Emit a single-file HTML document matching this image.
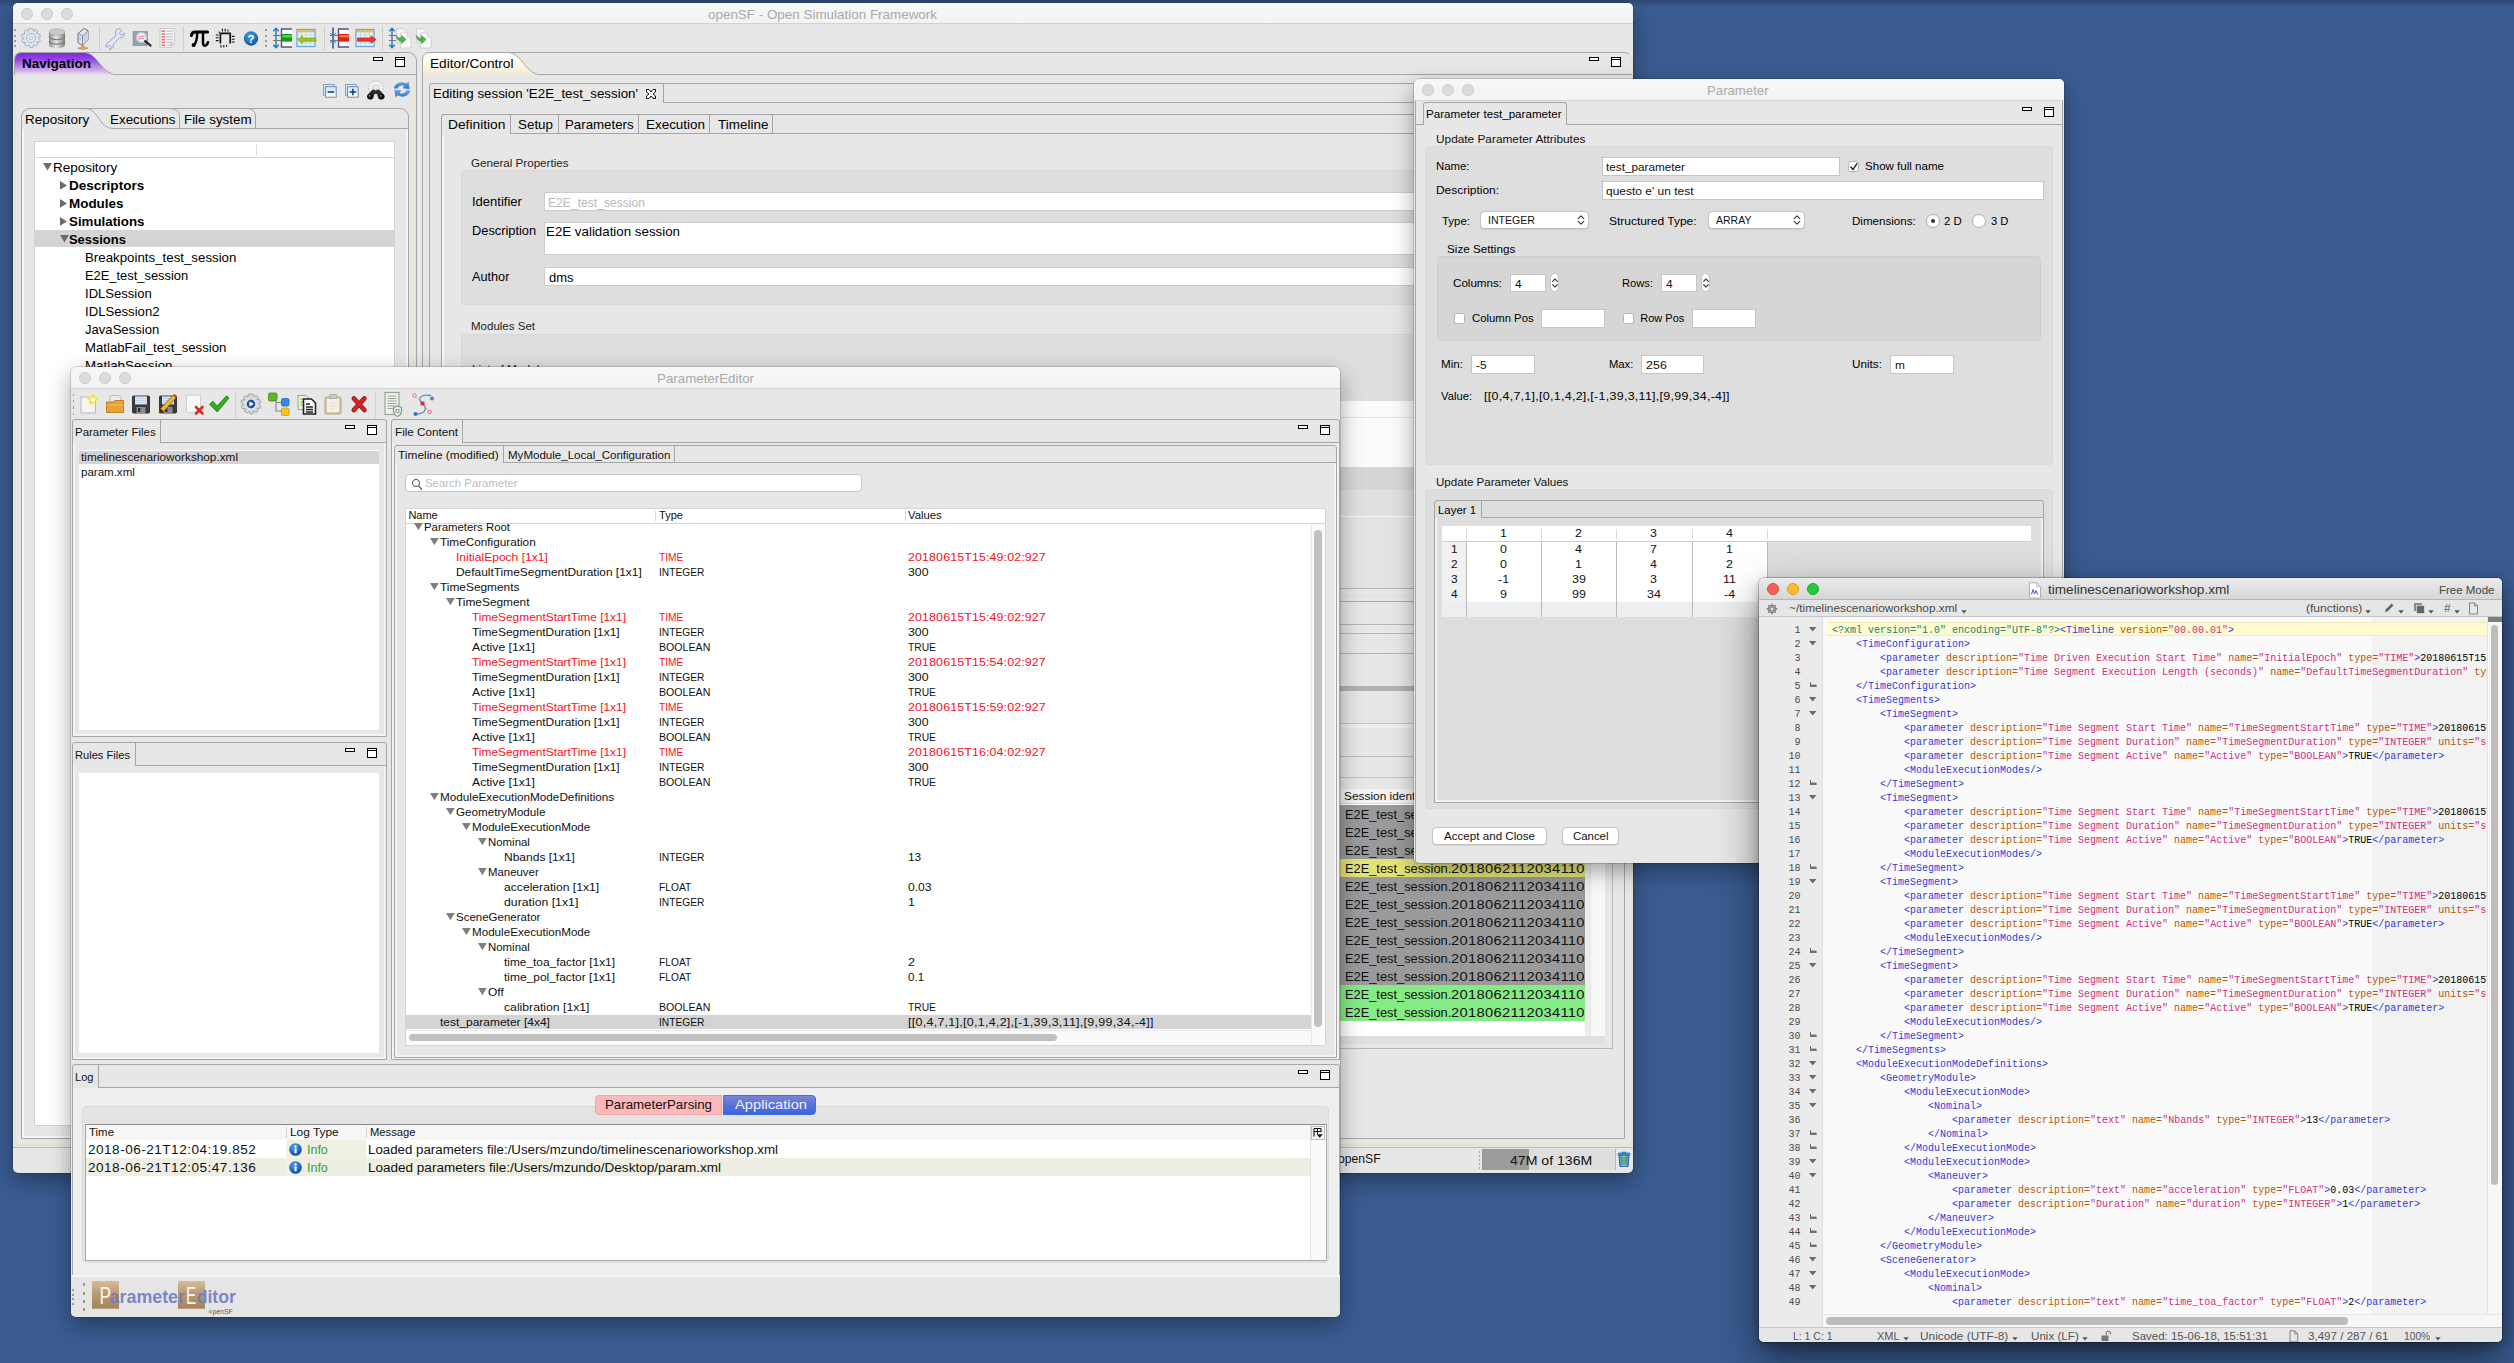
<!DOCTYPE html><html><head><meta charset="utf-8"><title>desktop</title><style>
html,body{margin:0;padding:0}
body{width:2514px;height:1363px;overflow:hidden;position:relative;background:#3a5c91;font-family:"Liberation Sans",sans-serif}
.win{position:absolute;overflow:hidden}
.win div,.win svg,.win span.a{position:absolute}
.topshade{position:absolute;left:0;top:0;width:2514px;height:7px;background:linear-gradient(rgba(0,0,0,.22),rgba(0,0,0,0))}
</style></head><body><div class="topshade"></div><div class="win" style="left:13px;top:3px;width:1620px;height:1170px;background:#e7e7e7;border-radius:5px;box-shadow:0 0 0 0.5px rgba(0,0,0,.28),0 8px 22px rgba(0,0,0,.36)"><div style="left:0.0px;top:0.0px;width:1620.0px;height:21.0px;background:linear-gradient(#f7f7f7,#f3f3f3);border-bottom:1px solid #d2d2d2;box-sizing:border-box"></div><div style="left:8.0px;top:5.0px;width:12.0px;height:12.0px;border-radius:50%;background:#dcdcdc;border:0.5px solid #cbcbcb;box-sizing:border-box"></div><div style="left:28.0px;top:5.0px;width:12.0px;height:12.0px;border-radius:50%;background:#dcdcdc;border:0.5px solid #cbcbcb;box-sizing:border-box"></div><div style="left:48.0px;top:5.0px;width:12.0px;height:12.0px;border-radius:50%;background:#dcdcdc;border:0.5px solid #cbcbcb;box-sizing:border-box"></div><div style="left:695.0px;top:4.0px;font-size:13px;line-height:16px;color:#a9a9a9;white-space:pre;transform:scaleX(1.0324);transform-origin:0 0;">openSF - Open Simulation Framework</div><div style="left:0.0px;top:21.0px;width:1620.0px;height:27.0px;background:#e7e7e7"></div><div style="left:86.0px;top:22.5px;width:1.0px;height:25.5px;background:#cfcfcf"></div><div style="left:170.2px;top:22.5px;width:1.0px;height:25.5px;background:#cfcfcf"></div><div style="left:311.2px;top:22.5px;width:1.0px;height:25.5px;background:#cfcfcf"></div><div style="left:369.0px;top:22.5px;width:1.0px;height:25.5px;background:#cfcfcf"></div><div style="left:1.2px;top:26.4px;width:1.7px;height:2.0px;background:#a39c88"></div><div style="left:1.2px;top:31.6px;width:1.7px;height:2.0px;background:#a39c88"></div><div style="left:1.2px;top:36.9px;width:1.7px;height:2.0px;background:#a39c88"></div><div style="left:1.2px;top:42.1px;width:1.7px;height:2.0px;background:#a39c88"></div><div style="left:252.0px;top:26.4px;width:1.7px;height:2.0px;background:#a39c88"></div><div style="left:252.0px;top:31.6px;width:1.7px;height:2.0px;background:#a39c88"></div><div style="left:252.0px;top:36.9px;width:1.7px;height:2.0px;background:#a39c88"></div><div style="left:252.0px;top:42.1px;width:1.7px;height:2.0px;background:#a39c88"></div><svg style="left:7.0px;top:23.0px;" width="22" height="24" viewBox="0 0 22 24"><g transform="translate(11,12)"><path d="M0,-9.5 L2,-9.2 L2.8,-6.8 L5,-8.3 L6.8,-6.6 L5.6,-4.3 L8.6,-4 L9.4,-1.6 L7,-0.3 L9.3,1.8 L8.4,4.2 L5.6,4 L6.7,6.7 L4.8,8.3 L2.7,6.6 L1.8,9.3 L-0.8,9.5 L-1.8,6.9 L-4.2,8.5 L-6.3,7 L-5.4,4.4 L-8.3,4.5 L-9.4,2.1 L-7.2,0.4 L-9.5,-1.4 L-8.8,-3.9 L-5.9,-3.9 L-7,-6.5 L-5.2,-8.2 L-2.8,-6.8 L-2.3,-9.3 Z" fill="#dfe5ee" stroke="#9aa9c0" stroke-width="0.9"/><circle r="4.4" fill="#eef2f8" stroke="#9aa9c0" stroke-width="0.9"/><circle r="2" fill="#e7e7e7" stroke="#a8b4c8" stroke-width="0.7"/></g></svg><svg style="left:33.2px;top:23.0px;" width="22" height="24" viewBox="0 0 22 24"><defs><linearGradient id="gdb" x1="0" x2="1"><stop offset="0" stop-color="#8d8d8d"/><stop offset="0.45" stop-color="#e6e6e6"/><stop offset="1" stop-color="#7e7e7e"/></linearGradient></defs><path d="M3,6 L3,19 A8,3.2 0 0 0 19,19 L19,6 Z" fill="url(#gdb)"/><ellipse cx="11" cy="6" rx="8" ry="3.2" fill="#c9c9c9" stroke="#a5a5a5" stroke-width="0.6"/><path d="M3,10.5 A8,3.2 0 0 0 19,10.5 M3,15 A8,3.2 0 0 0 19,15" fill="none" stroke="#6f6f6f" stroke-width="1"/></svg><svg style="left:59.0px;top:23.0px;" width="22" height="24" viewBox="0 0 22 24"><path d="M6,7.5 L12,2.6 L16,4.6 L16,14 L10.5,19.6 L6,16.6 Z" fill="#e6e4f1" stroke="#5f5f7c" stroke-width="0.9" stroke-linejoin="round"/><path d="M10.5,10 L16,4.8 L16,14 L10.5,19.4 Z" fill="#d2d0e4"/><path d="M6,7.5 L10.5,10 L16,4.8 M10.5,10 L10.5,19.4" fill="none" stroke="#7c7c98" stroke-width="0.8"/><path d="M7.2,11 L9.3,12.2 M7.2,13 L9.3,14.2" stroke="#9a9ab8" stroke-width="0.8"/><rect x="10.4" y="19.4" width="1.2" height="2" fill="#6d6d8a"/><rect x="6" y="21.4" width="10" height="1.5" fill="#8f93ad"/><circle cx="11" cy="22" r="1.9" fill="#ffab2e" stroke="#e27a12" stroke-width="0.6"/></svg><svg style="left:91.0px;top:23.0px;" width="22" height="24" viewBox="0 0 22 24"><path d="M14.5,2.5 A4.2,4.2 0 0 0 12.2,9 L5.5,15.8 A3.8,3.8 0 0 0 2.6,21.5 L5.4,19 L7.6,21 L5.2,23.3 A3.8,3.8 0 0 0 9.3,18.3 L15.5,11.8 A4.2,4.2 0 0 0 20.3,7 L17.6,9.4 L15.3,7.3 L17.8,4.4 A4.2,4.2 0 0 0 14.5,2.5 Z" fill="#e4e9f2" stroke="#92a2c0" stroke-width="1"/></svg><svg style="left:116.8px;top:23.0px;" width="22" height="24" viewBox="0 0 22 24"><rect x="3" y="5.5" width="14.5" height="14" fill="#93a1ad" stroke="#7d8a96" stroke-width="0.6"/><circle cx="11.5" cy="11.5" r="5.2" fill="#e9eef3" stroke="#b9c3cc" stroke-width="1.2"/><path d="M8,11 L15,10 M8,13 L14,12.4" stroke="#e58c8c" stroke-width="0.9"/><path d="M15.2,15.2 L20.5,19.5" stroke="#222" stroke-width="2.2" stroke-linecap="round"/></svg><svg style="left:143.0px;top:23.0px;" width="22" height="24" viewBox="0 0 22 24"><path d="M4,2.5 L18.5,2.5 L18.5,17 L14.5,21.5 L4,21.5 Z" fill="#f4f4f4" stroke="#c3c3c3" stroke-width="0.8"/><path d="M18.5,17 L14.5,17 L14.5,21.5 Z" fill="#d0d0d0"/><rect x="5.5" y="4.5" width="3.6" height="1.5" fill="#ee6b6b"/><rect x="10.3" y="4.5" width="6.5" height="1.3" fill="#c8c8c8"/><rect x="5.5" y="7.3" width="3.6" height="1.5" fill="#ee6b6b"/><rect x="10.3" y="7.3" width="6.5" height="1.3" fill="#c8c8c8"/><rect x="5.5" y="10.1" width="3.6" height="1.5" fill="#ee6b6b"/><rect x="10.3" y="10.1" width="6.5" height="1.3" fill="#c8c8c8"/><rect x="5.5" y="12.899999999999999" width="3.6" height="1.5" fill="#ee6b6b"/><rect x="10.3" y="12.899999999999999" width="6.5" height="1.3" fill="#c8c8c8"/><rect x="5.5" y="15.7" width="3.6" height="1.5" fill="#ee6b6b"/><rect x="10.3" y="15.7" width="6.5" height="1.3" fill="#c8c8c8"/><rect x="5.5" y="18.5" width="3.6" height="1.5" fill="#ee6b6b"/><rect x="10.3" y="18.5" width="6.5" height="1.3" fill="#c8c8c8"/></svg><svg style="left:176.6px;top:25.6px;" width="20" height="20" viewBox="0 0 20 20"><g fill="none" stroke="#000" stroke-linecap="round"><path d="M1.4,6.6 C1.8,3.4 3.4,2.9 5.4,2.9 L17.6,2.9" stroke-width="3"/><path d="M7.2,3.6 C7.2,9 6.6,14 3.6,16.6" stroke-width="2.5"/><path d="M13,3.6 L13,13.4 C13,17.6 16.6,18 18,13.2" stroke-width="2.5"/></g><circle cx="3.6" cy="16" r="2" fill="#000"/></svg><svg style="left:200.8px;top:23.0px;" width="22" height="24" viewBox="0 0 22 24"><path d="M6.4,17.5 L6.4,7.3 L16.2,7.3 L16.2,17.5" fill="none" stroke="#111" stroke-width="1.7"/><path d="M1.8,9 L4.6,9 M1.8,11.8 L4.6,11.8 M1.8,14.6 L4.6,14.6 M17.8,10.4 L20.6,10.4 M17.8,13.2 L20.6,13.2 M17.8,16 L20.6,16 M8.4,2.8 L8.4,5.4 M11.2,2.8 L11.2,5.4 M14,3.6 L14,5.4 M7,19 L7,21.6 M9.8,19 L9.8,21.6 M12.6,19 L12.6,20.8" stroke="#111" stroke-width="1.1"/><rect x="4.6" y="5.6" width="1.2" height="1.2" fill="#111"/></svg><svg style="left:227.0px;top:23.0px;" width="22" height="24" viewBox="0 0 22 24"><defs><radialGradient id="ghe" cx="0.4" cy="0.3" r="0.8"><stop offset="0" stop-color="#3f9bdc"/><stop offset="1" stop-color="#0f4f9a"/></radialGradient></defs><circle cx="11" cy="12.5" r="7.2" fill="url(#ghe)"/><text x="11" y="16.8" font-family="Liberation Sans" font-weight="700" font-size="11.5" fill="#fff" text-anchor="middle">?</text></svg><svg style="left:258.6px;top:23.0px;" width="22" height="24" viewBox="0 0 22 24"><path d="M4,2.5 L4,21.5 M1.3,5.3 L4,2.3 L6.7,5.3 M1.3,18.7 L4,21.7 L6.7,18.7" fill="none" stroke="#1f78c8" stroke-width="1.4"/><path d="M1,9.5 L9,9.5 M1,14.5 L9,14.5" stroke="#777" stroke-width="1.2"/><path d="M20,3 L9.5,3 L9.5,21 L20,21" fill="#fff" stroke="#5c5078" stroke-width="1.4"/><rect x="9.5" y="8" width="10.5" height="7.6" fill="#119a11"/><rect x="10.5" y="9.2" width="9.5" height="2.2" fill="#5fd45f"/></svg><svg style="left:282.4px;top:23.0px;" width="24" height="24" viewBox="0 0 24 24"><rect x="2" y="3.5" width="18" height="17" fill="#eaf4fc" stroke="#69a7d8" stroke-width="1.3"/><rect x="2.6" y="4.2" width="16.8" height="2.2" fill="#f3b434"/><path d="M6.5,4 L6.5,20 M11,4 L11,20 M15.5,4 L15.5,20 M2,9 L20,9 M2,13 L20,13 M2,17 L20,17" stroke="#b7d6ee" stroke-width="0.9"/><path d="M2.5,13.6 L7.5,10 L7.5,12 L21,12 L21,15.2 L7.5,15.2 L7.5,17.2 Z" fill="#a4c516" stroke="#7f9d06" stroke-width="0.7"/></svg><svg style="left:316.3px;top:23.0px;" width="22" height="24" viewBox="0 0 22 24"><path d="M4,1.5 L4,22.5" stroke="#104a9c" stroke-width="1.4"/><path d="M1,7.2 L3,9 M7,7.2 L5,9 M1,16.8 L3,15 M7,16.8 L5,15" stroke="#1f78c8" stroke-width="1"/><path d="M1,9.5 L9,9.5 M1,14.5 L9,14.5" stroke="#777" stroke-width="1.2"/><path d="M20,3 L9.5,3 L9.5,21 L20,21" fill="#fff" stroke="#5c5078" stroke-width="1.4"/><rect x="9.5" y="8" width="10.5" height="7.6" fill="#e21d0a"/><rect x="10.5" y="9.2" width="9.5" height="2.2" fill="#ff7b55"/></svg><svg style="left:340.6px;top:23.0px;" width="24" height="24" viewBox="0 0 24 24"><rect x="2" y="3.5" width="18" height="17" fill="#eaf4fc" stroke="#69a7d8" stroke-width="1.3"/><rect x="2.6" y="4.2" width="16.8" height="2.2" fill="#f3b434"/><path d="M6.5,4 L6.5,20 M11,4 L11,20 M15.5,4 L15.5,20 M2,9 L20,9 M2,13 L20,13 M2,17 L20,17" stroke="#b7d6ee" stroke-width="0.9"/><path d="M22,13.6 L17,10 L17,12 L3.5,12 L3.5,15.2 L17,15.2 L17,17.2 Z" fill="#e8382a" stroke="#c3170b" stroke-width="0.7"/></svg><svg style="left:374.5px;top:23.0px;" width="24" height="24" viewBox="0 0 24 24"><path d="M4,2.5 L4,21.5 M1.3,5.3 L4,2.3 L6.7,5.3 M1.3,18.7 L4,21.7 L6.7,18.7" fill="none" stroke="#1f78c8" stroke-width="1.4"/><path d="M1,9.5 L8,9.5 M1,14.5 L8,14.5" stroke="#777" stroke-width="1.2"/><g transform="translate(7.5,0)"><path d="M1,2.5 L7.5,2.5 L11.5,6.5 L11.5,16 L1,16 Z" fill="#f4f4f4" stroke="#cdcdcd" stroke-width="0.9"/><path d="M5,7 L11.5,7 L15.5,11 L15.5,22 L5,22 Z" fill="#fbfbfb" stroke="#cdcdcd" stroke-width="0.9"/><path d="M11.5,7 L11.5,11 L15.5,11" fill="#ececec" stroke="#cdcdcd" stroke-width="0.7"/><path d="M0.5,9.2 C2.5,12.5 4.5,12.2 6,12 L6,9.4 L10.6,13.4 L6,17.4 L6,15 C3.5,15.6 1.5,13.5 0.5,9.2 Z" fill="#4fb44c" stroke="#2f8f2e" stroke-width="0.6"/></g></svg><svg style="left:400.0px;top:23.0px;" width="24" height="24" viewBox="0 0 24 24"><g transform="translate(2.5,0)"><path d="M1,2.5 L7.5,2.5 L11.5,6.5 L11.5,16 L1,16 Z" fill="#f4f4f4" stroke="#cdcdcd" stroke-width="0.9"/><path d="M5,7 L11.5,7 L15.5,11 L15.5,22 L5,22 Z" fill="#fbfbfb" stroke="#cdcdcd" stroke-width="0.9"/><path d="M11.5,7 L11.5,11 L15.5,11" fill="#ececec" stroke="#cdcdcd" stroke-width="0.7"/><path d="M0.5,9.2 C2.5,12.5 4.5,12.2 6,12 L6,9.4 L10.6,13.4 L6,17.4 L6,15 C3.5,15.6 1.5,13.5 0.5,9.2 Z" fill="#4fb44c" stroke="#2f8f2e" stroke-width="0.6"/></g></svg><div style="left:1.0px;top:48.5px;width:402.5px;height:1094.5px;border:1px solid #a6a6a6;border-left:2px solid #ebe4cb;border-bottom:2px solid #ebe4cb;border-radius:9px 9px 0 0;box-sizing:border-box"></div><svg style="left:1.0px;top:48.5px;" width="110" height="24" viewBox="0 0 110 24"><defs><linearGradient id="gp" x1="0" y1="0" x2="0" y2="1"><stop offset="0" stop-color="#7f23df"/><stop offset="0.3" stop-color="#9245e4"/><stop offset="0.75" stop-color="#cba7ec"/><stop offset="1" stop-color="#ebe6e2"/></linearGradient></defs><path d="M0.5,23.5 L0.5,8 Q0.5,0.5 8,0.5 L70,0.5 C84,0.5 87,23 104,23 L104,23.5 Z" fill="url(#gp)"/><path d="M0.5,23.5 L0.5,8 Q0.5,0.5 8,0.5 L70,0.5 C84,0.5 87,23 104,23" fill="none" stroke="#a6a6a6" stroke-width="1"/></svg><div style="left:105.0px;top:71.0px;width:298.0px;height:1.0px;background:#a6a6a6"></div><div style="left:401.2px;top:72.0px;width:1.6px;height:1069.0px;background:#ece6cd"></div><div style="left:9.0px;top:53.0px;font-size:13px;line-height:16px;color:#000;white-space:pre;font-weight:700;transform:scaleX(1.0383);transform-origin:0 0;">Navigation</div><div style="left:360.3px;top:54.0px;width:10.0px;height:4.0px;border:1px solid #000;box-sizing:border-box;background:#fff"></div><div style="left:382.2px;top:54.0px;width:10.0px;height:10.0px;border:1px solid #000;box-sizing:border-box;background:#fff"></div><div style="left:383.2px;top:56.0px;width:8.0px;height:1.0px;background:#000"></div><svg style="left:309.6px;top:80.6px;" width="14" height="14" viewBox="0 0 14 14"><defs><linearGradient id="gst322" x1="0" y1="0" x2="0" y2="1"><stop offset="0" stop-color="#cfe9fb"/><stop offset="1" stop-color="#ffffff"/></linearGradient></defs><rect x="0.5" y="0.5" width="10.7" height="10.7" fill="#d6ecfb" stroke="#8f9ac6" stroke-width="1"/><rect x="2.5" y="2.7" width="10.7" height="10.5" fill="url(#gst322)" stroke="#7a86b8" stroke-width="1"/><path d="M4.6,8 L11.2,8" stroke="#0b3b7a" stroke-width="1.5"/></svg><svg style="left:331.6px;top:80.6px;" width="14" height="14" viewBox="0 0 14 14"><defs><linearGradient id="gst344" x1="0" y1="0" x2="0" y2="1"><stop offset="0" stop-color="#cfe9fb"/><stop offset="1" stop-color="#ffffff"/></linearGradient></defs><rect x="0.5" y="0.5" width="10.7" height="10.7" fill="#d6ecfb" stroke="#8f9ac6" stroke-width="1"/><rect x="2.5" y="2.7" width="10.7" height="10.5" fill="url(#gst344)" stroke="#7a86b8" stroke-width="1"/><path d="M4.6,8 L11.2,8" stroke="#0b3b7a" stroke-width="1.5"/><path d="M7.9,4.8 L7.9,11.2" stroke="#0b3b7a" stroke-width="1.5"/></svg><svg style="left:351.5px;top:76.5px;" width="22" height="21" viewBox="0 0 22 21"><g><circle cx="10.8" cy="8.2" r="5.6" fill="none" stroke="#f4f4f4" stroke-width="3.6"/><circle cx="10.8" cy="8.2" r="7.2" fill="none" stroke="#c4c4c4" stroke-width="1.3" stroke-dasharray="1.7 1.3"/><circle cx="10.8" cy="8.2" r="3.7" fill="none" stroke="#cfcfcf" stroke-width="0.7"/><path d="M7,10 L9.6,9.4 L10.8,11 L12,9.4 L14.6,10 L19.8,16 A3.6,3.6 0 0 1 13.4,18.2 L12.2,14 L9.4,14 L8.2,18.2 A3.6,3.6 0 0 1 1.8,16 Z" fill="#2b2b2b"/><circle cx="5.2" cy="16.4" r="2.9" fill="#111"/><circle cx="16.4" cy="16.4" r="2.9" fill="#111"/><circle cx="4.6" cy="15.8" r="0.9" fill="#9a9a9a"/><circle cx="15.8" cy="15.8" r="0.9" fill="#9a9a9a"/></g></svg><svg style="left:379.5px;top:77.0px;" width="18" height="19" viewBox="0 0 18 19"><defs><linearGradient id="grf" x1="0" y1="0" x2="0" y2="1"><stop offset="0" stop-color="#6aa6e6"/><stop offset="1" stop-color="#2f74c6"/></linearGradient></defs><path d="M1,8.6 A7.6,6.6 0 0 1 13.2,3.6 L15.6,1.4 L16.6,9 L9.4,8.2 L11.4,5.9 A4.6,3.8 0 0 0 4.6,8.6 Z" fill="url(#grf)"/><path d="M17,10.2 A7.6,6.6 0 0 1 4.8,15.2 L2.4,17.4 L1.4,9.8 L8.6,10.6 L6.6,12.9 A4.6,3.8 0 0 0 13.4,10.2 Z" fill="url(#grf)"/></svg><div style="left:8.0px;top:105.0px;width:388.0px;height:1031.0px;border:1px solid #a6a6a6;border-radius:9px 9px 0 0;box-sizing:border-box"></div><div style="left:99.0px;top:125.0px;width:296.0px;height:1.0px;background:#a6a6a6"></div><svg style="left:73.0px;top:105.0px;" width="30" height="22" viewBox="0 0 30 22"><path d="M0,0.5 C12,0.5 13,20.5 27,20.5" fill="none" stroke="#a6a6a6" stroke-width="1"/></svg><svg style="left:157.0px;top:105.0px;" width="12" height="22" viewBox="0 0 12 22"><path d="M0,0.5 Q9.5,0.5 9.5,8 L9.5,21" fill="none" stroke="#a6a6a6" stroke-width="1"/></svg><svg style="left:233.0px;top:105.0px;" width="12" height="22" viewBox="0 0 12 22"><path d="M0,0.5 Q9.5,0.5 9.5,8 L9.5,21" fill="none" stroke="#a6a6a6" stroke-width="1"/></svg><div style="left:12.0px;top:109.0px;font-size:13px;line-height:16px;color:#000;white-space:pre;transform:scaleX(1.0348);transform-origin:0 0;">Repository</div><div style="left:97.0px;top:109.0px;font-size:13px;line-height:16px;color:#000;white-space:pre;transform:scaleX(1.0300);transform-origin:0 0;">Executions</div><div style="left:171.0px;top:109.0px;font-size:13px;line-height:16px;color:#000;white-space:pre;transform:scaleX(1.0269);transform-origin:0 0;">File system</div><div style="left:9.0px;top:126.0px;width:2.0px;height:1009.0px;background:#f6f6f6"></div><div style="left:9.0px;top:1133.0px;width:386.0px;height:2.0px;background:#f6f6f6"></div><div style="left:393.0px;top:126.0px;width:2.0px;height:1008.0px;background:#f6f6f6"></div><div style="left:21.0px;top:138.0px;width:361.4px;height:984.5px;background:#fff;border:1px solid #d2d2d2;box-sizing:border-box"></div><div style="left:22.0px;top:154.0px;width:359.4px;height:1.0px;background:#d9d9d9"></div><div style="left:243.4px;top:141.0px;width:1.0px;height:11.0px;background:#dcdcdc"></div><div style="left:22.0px;top:227.0px;width:359.4px;height:17.0px;background:#d4d4d4"></div><svg style="left:29.9px;top:160.4px;" width="9" height="7.6" viewBox="0 0 9 7.6"><path d="M0,0 L9,0 L4.5,7.6 Z" fill="#6c6c6c"/></svg><div style="left:40.4px;top:157.0px;font-size:13px;line-height:16px;color:#000;white-space:pre;transform:scaleX(1.0348);transform-origin:0 0;">Repository</div><svg style="left:47.0px;top:177.8px;" width="7" height="8.8" viewBox="0 0 7 8.8"><path d="M0,0 L7,4.4 L0,8.8 Z" fill="#6c6c6c"/></svg><div style="left:55.9px;top:175.0px;font-size:13px;line-height:16px;color:#000;white-space:pre;font-weight:700;transform:scaleX(1.0408);transform-origin:0 0;">Descriptors</div><svg style="left:47.0px;top:195.8px;" width="7" height="8.8" viewBox="0 0 7 8.8"><path d="M0,0 L7,4.4 L0,8.8 Z" fill="#6c6c6c"/></svg><div style="left:55.9px;top:193.0px;font-size:13px;line-height:16px;color:#000;white-space:pre;font-weight:700;transform:scaleX(1.0337);transform-origin:0 0;">Modules</div><svg style="left:47.0px;top:213.8px;" width="7" height="8.8" viewBox="0 0 7 8.8"><path d="M0,0 L7,4.4 L0,8.8 Z" fill="#6c6c6c"/></svg><div style="left:55.9px;top:211.0px;font-size:13px;line-height:16px;color:#000;white-space:pre;font-weight:700;transform:scaleX(1.0247);transform-origin:0 0;">Simulations</div><svg style="left:46.6px;top:232.4px;" width="9" height="7.6" viewBox="0 0 9 7.6"><path d="M0,0 L9,0 L4.5,7.6 Z" fill="#6c6c6c"/></svg><div style="left:55.9px;top:229.0px;font-size:13px;line-height:16px;color:#000;white-space:pre;font-weight:700;">Sessions</div><div style="left:72.2px;top:247.0px;font-size:13px;line-height:16px;color:#000;white-space:pre;transform:scaleX(1.0220);transform-origin:0 0;">Breakpoints_test_session</div><div style="left:72.2px;top:265.0px;font-size:13px;line-height:16px;color:#000;white-space:pre;transform:scaleX(0.9917);transform-origin:0 0;">E2E_test_session</div><div style="left:72.2px;top:283.0px;font-size:13px;line-height:16px;color:#000;white-space:pre;transform:scaleX(1.0048);transform-origin:0 0;">IDLSession</div><div style="left:72.2px;top:301.0px;font-size:13px;line-height:16px;color:#000;white-space:pre;transform:scaleX(1.0107);transform-origin:0 0;">IDLSession2</div><div style="left:72.2px;top:319.0px;font-size:13px;line-height:16px;color:#000;white-space:pre;transform:scaleX(1.0066);transform-origin:0 0;">JavaSession</div><div style="left:72.2px;top:337.0px;font-size:13px;line-height:16px;color:#000;white-space:pre;transform:scaleX(1.0132);transform-origin:0 0;">MatlabFail_test_session</div><div style="left:72.2px;top:355.0px;font-size:13px;line-height:16px;color:#000;white-space:pre;transform:scaleX(1.0261);transform-origin:0 0;">MatlabSession</div><div style="left:408.5px;top:48.5px;width:1211.0px;height:1094.5px;border:1px solid #a6a6a6;border-right:2px solid #ebe4cb;border-bottom:2px solid #ebe4cb;border-radius:9px 9px 0 0;box-sizing:border-box"></div><svg style="left:408.5px;top:48.5px;" width="124" height="24" viewBox="0 0 124 24"><defs><linearGradient id="gc" x1="0" y1="0" x2="0" y2="1"><stop offset="0" stop-color="#ffffff"/><stop offset="0.5" stop-color="#fbf9f1"/><stop offset="1" stop-color="#efe9d4"/></linearGradient></defs><path d="M0.5,23.5 L0.5,8 Q0.5,0.5 8,0.5 L86,0.5 C100,0.5 103,23 120,23 L120,23.5 Z" fill="url(#gc)"/><path d="M0.5,23.5 L0.5,8 Q0.5,0.5 8,0.5 L86,0.5 C100,0.5 103,23 120,23" fill="none" stroke="#a6a6a6" stroke-width="1"/></svg><div style="left:528.0px;top:71.0px;width:1091.0px;height:1.0px;background:#a6a6a6"></div><div style="left:417.0px;top:53.0px;font-size:13px;line-height:16px;color:#000;white-space:pre;transform:scaleX(1.0506);transform-origin:0 0;">Editor/Control</div><div style="left:1576.2px;top:54.0px;width:10.0px;height:4.0px;border:1px solid #000;box-sizing:border-box;background:#fff"></div><div style="left:1598.2px;top:54.0px;width:10.0px;height:10.0px;border:1px solid #000;box-sizing:border-box;background:#fff"></div><div style="left:1599.2px;top:56.0px;width:8.0px;height:1.0px;background:#000"></div><div style="left:416.4px;top:79.5px;width:1195.5px;height:1056.3px;border:1px solid #a6a6a6;border-radius:3px 3px 0 0;box-sizing:border-box"></div><div style="left:650.0px;top:79.5px;width:1.0px;height:20.0px;background:#a6a6a6"></div><div style="left:650.0px;top:98.7px;width:961.0px;height:1.0px;background:#a6a6a6"></div><div style="left:420.0px;top:83.0px;font-size:13px;line-height:16px;color:#000;white-space:pre;transform:scaleX(1.0246);transform-origin:0 0;">Editing session 'E2E_test_session'</div><svg style="left:632.0px;top:85.0px;" width="12" height="12" viewBox="0 0 12 12"><path d="M1.5,1.5 L4,1.5 L6,4 L8,1.5 L10.5,1.5 L10.5,4 L8,6 L10.5,8 L10.5,10.5 L8,10.5 L6,8 L4,10.5 L1.5,10.5 L1.5,8 L4,6 L1.5,4 Z" fill="#fff" stroke="#111" stroke-width="1"/></svg><div style="left:427.6px;top:111.0px;width:1170.4px;height:1010.0px;border:1px solid #a6a6a6;border-right:none;border-bottom:none;border-radius:3px 0 0 0;box-sizing:border-box"></div><div style="left:496.6px;top:130.0px;width:1100.4px;height:1.0px;background:#a6a6a6"></div><div style="left:496.6px;top:111.5px;width:1.0px;height:19.0px;background:#a6a6a6"></div><div style="left:544.5px;top:111.5px;width:1.0px;height:19.0px;background:#a6a6a6"></div><div style="left:625.4px;top:111.5px;width:1.0px;height:19.0px;background:#a6a6a6"></div><div style="left:696.4px;top:111.5px;width:1.0px;height:19.0px;background:#a6a6a6"></div><div style="left:759.4px;top:111.5px;width:1.0px;height:19.0px;background:#a6a6a6"></div><div style="left:428.6px;top:131.5px;width:2.0px;height:988.5px;background:#f6f6f6"></div><div style="left:434.6px;top:114.0px;font-size:13px;line-height:16px;color:#000;white-space:pre;transform:scaleX(1.0591);transform-origin:0 0;">Definition</div><div style="left:504.6px;top:114.0px;font-size:13px;line-height:16px;color:#000;white-space:pre;transform:scaleX(1.0302);transform-origin:0 0;">Setup</div><div style="left:552.4px;top:114.0px;font-size:13px;line-height:16px;color:#000;white-space:pre;transform:scaleX(1.0209);transform-origin:0 0;">Parameters</div><div style="left:633.4px;top:114.0px;font-size:13px;line-height:16px;color:#000;white-space:pre;transform:scaleX(1.0334);transform-origin:0 0;">Execution</div><div style="left:704.6px;top:114.0px;font-size:13px;line-height:16px;color:#000;white-space:pre;transform:scaleX(1.0361);transform-origin:0 0;">Timeline</div><div style="left:458.4px;top:152.0px;font-size:11px;line-height:16px;color:#222;white-space:pre;transform:scaleX(1.0560);transform-origin:0 0;">General Properties</div><div style="left:448.0px;top:167.4px;width:1139.0px;height:134.6px;background:#dedede;border-radius:4px;border:1px solid #d8d8d8;box-sizing:border-box"></div><div style="left:459.0px;top:191.0px;font-size:13px;line-height:16px;color:#000;white-space:pre;">Identifier</div><div style="left:531.4px;top:189.0px;width:1045.6px;height:19.0px;background:#fff;border:1px solid #cdcdcd;box-sizing:border-box"></div><div style="left:535.3px;top:192.0px;font-size:12px;line-height:16px;color:#b9b9b9;white-space:pre;transform:scaleX(1.0098);transform-origin:0 0;">E2E_test_session</div><div style="left:459.0px;top:220.0px;font-size:13px;line-height:16px;color:#000;white-space:pre;transform:scaleX(0.9857);transform-origin:0 0;">Description</div><div style="left:531.4px;top:219.4px;width:1045.6px;height:32.6px;background:#fff;border:1px solid #cdcdcd;box-sizing:border-box"></div><div style="left:532.6px;top:221.0px;font-size:13px;line-height:16px;color:#000;white-space:pre;transform:scaleX(1.0244);transform-origin:0 0;">E2E validation session</div><div style="left:459.0px;top:266.0px;font-size:13px;line-height:16px;color:#000;white-space:pre;transform:scaleX(0.9764);transform-origin:0 0;">Author</div><div style="left:531.4px;top:264.0px;width:1045.6px;height:19.3px;background:#fff;border:1px solid #cdcdcd;box-sizing:border-box"></div><div style="left:535.5px;top:267.0px;font-size:12px;line-height:16px;color:#000;white-space:pre;transform:scaleX(1.0800);transform-origin:0 0;">dms</div><div style="left:458.4px;top:315.0px;font-size:11px;line-height:16px;color:#222;white-space:pre;transform:scaleX(1.0467);transform-origin:0 0;">Modules Set</div><div style="left:448.0px;top:330.5px;width:1139.0px;height:446.5px;background:#dedede;border-radius:4px;border:1px solid #d8d8d8;box-sizing:border-box"></div><div style="left:459.0px;top:358.0px;font-size:11px;line-height:16px;color:#222;white-space:pre;transform:scaleX(1.0800);transform-origin:0 0;">List of Modules</div><div style="left:1287.0px;top:398.0px;width:140.0px;height:66.0px;background:#fbfbfb"></div><div style="left:1287.0px;top:413.5px;width:140.0px;height:1.0px;background:#e2e2e2"></div><div style="left:1287.0px;top:464.0px;width:140.0px;height:22.7px;background:#d6d6d6"></div><div style="left:1287.0px;top:486.7px;width:140.0px;height:26.6px;background:#e0e0e0"></div><div style="left:1287.0px;top:513.3px;width:140.0px;height:1.2px;background:#f8f8f8"></div><div style="left:1287.0px;top:514.5px;width:140.0px;height:70.5px;background:#e3e3e3"></div><div style="left:1287.0px;top:584.5px;width:140.0px;height:1.0px;background:#b4b4b4"></div><div style="left:1287.0px;top:585.5px;width:140.0px;height:211.5px;background:#e7e7e7"></div><div style="left:1287.0px;top:591.5px;width:140.0px;height:1.0px;background:#ebe2c2"></div><div style="left:1287.0px;top:598.0px;width:140.0px;height:1.0px;background:#aaaaaa"></div><div style="left:1287.0px;top:621.0px;width:140.0px;height:1.0px;background:#b6b6b6"></div><div style="left:1287.0px;top:629.5px;width:140.0px;height:1.0px;background:#b6b6b6"></div><div style="left:1287.0px;top:649.5px;width:140.0px;height:1.0px;background:#b6b6b6"></div><div style="left:1287.0px;top:682.5px;width:140.0px;height:5.0px;background:#b2b2b2"></div><div style="left:1287.0px;top:719.5px;width:140.0px;height:1.0px;background:#c4c4c4"></div><div style="left:1287.0px;top:720.5px;width:140.0px;height:4.0px;background:#eeeeee"></div><div style="left:1287.0px;top:753.0px;width:140.0px;height:1.0px;background:#bcbcbc"></div><div style="left:1287.0px;top:774.0px;width:140.0px;height:1.0px;background:#c4c4c4"></div><div style="left:1287.0px;top:786.0px;width:285.3px;height:247.0px;background:#fff"></div><div style="left:1287.0px;top:786.0px;width:285.3px;height:15.0px;background:#f3f3f3;border-bottom:1px solid #dcdcdc;box-sizing:border-box"></div><div style="left:1331.2px;top:785.0px;font-size:11px;line-height:16px;color:#111;white-space:pre;transform:scaleX(1.0800);transform-origin:0 0;">Session identifier</div><div style="left:1287.0px;top:802.2px;width:285.3px;height:18.0px;background:#9a9a9a"></div><div style="left:1331.5px;top:804.0px;font-size:13px;line-height:16px;color:#111;white-space:pre;transform:scaleX(0.9863);transform-origin:0 0;">E2E_test_session.</div><div style="left:1437.7px;top:804.0px;font-size:13px;line-height:16px;color:#111;white-space:pre;letter-spacing:0.29px;transform:scaleX(1.1300);transform-origin:0 0;">2018062112034110</div><div style="left:1287.0px;top:820.2px;width:285.3px;height:18.0px;background:#9a9a9a"></div><div style="left:1331.5px;top:822.0px;font-size:13px;line-height:16px;color:#111;white-space:pre;transform:scaleX(0.9863);transform-origin:0 0;">E2E_test_session.</div><div style="left:1437.7px;top:822.0px;font-size:13px;line-height:16px;color:#111;white-space:pre;letter-spacing:0.29px;transform:scaleX(1.1300);transform-origin:0 0;">2018062112034110</div><div style="left:1287.0px;top:838.2px;width:285.3px;height:18.0px;background:#9a9a9a"></div><div style="left:1331.5px;top:840.0px;font-size:13px;line-height:16px;color:#111;white-space:pre;transform:scaleX(0.9863);transform-origin:0 0;">E2E_test_session.</div><div style="left:1437.7px;top:840.0px;font-size:13px;line-height:16px;color:#111;white-space:pre;letter-spacing:0.29px;transform:scaleX(1.1300);transform-origin:0 0;">2018062112034110</div><div style="left:1287.0px;top:856.2px;width:285.3px;height:18.0px;background:#e3e375"></div><div style="left:1331.5px;top:858.0px;font-size:13px;line-height:16px;color:#111;white-space:pre;transform:scaleX(0.9863);transform-origin:0 0;">E2E_test_session.</div><div style="left:1437.7px;top:858.0px;font-size:13px;line-height:16px;color:#111;white-space:pre;letter-spacing:0.29px;transform:scaleX(1.1300);transform-origin:0 0;">2018062112034110</div><div style="left:1287.0px;top:874.2px;width:285.3px;height:18.0px;background:#9a9a9a"></div><div style="left:1331.5px;top:876.0px;font-size:13px;line-height:16px;color:#111;white-space:pre;transform:scaleX(0.9863);transform-origin:0 0;">E2E_test_session.</div><div style="left:1437.7px;top:876.0px;font-size:13px;line-height:16px;color:#111;white-space:pre;letter-spacing:0.29px;transform:scaleX(1.1300);transform-origin:0 0;">2018062112034110</div><div style="left:1287.0px;top:892.2px;width:285.3px;height:18.0px;background:#9a9a9a"></div><div style="left:1331.5px;top:894.0px;font-size:13px;line-height:16px;color:#111;white-space:pre;transform:scaleX(0.9863);transform-origin:0 0;">E2E_test_session.</div><div style="left:1437.7px;top:894.0px;font-size:13px;line-height:16px;color:#111;white-space:pre;letter-spacing:0.29px;transform:scaleX(1.1300);transform-origin:0 0;">2018062112034110</div><div style="left:1287.0px;top:910.2px;width:285.3px;height:18.0px;background:#9a9a9a"></div><div style="left:1331.5px;top:912.0px;font-size:13px;line-height:16px;color:#111;white-space:pre;transform:scaleX(0.9863);transform-origin:0 0;">E2E_test_session.</div><div style="left:1437.7px;top:912.0px;font-size:13px;line-height:16px;color:#111;white-space:pre;letter-spacing:0.29px;transform:scaleX(1.1300);transform-origin:0 0;">2018062112034110</div><div style="left:1287.0px;top:928.2px;width:285.3px;height:18.0px;background:#9a9a9a"></div><div style="left:1331.5px;top:930.0px;font-size:13px;line-height:16px;color:#111;white-space:pre;transform:scaleX(0.9863);transform-origin:0 0;">E2E_test_session.</div><div style="left:1437.7px;top:930.0px;font-size:13px;line-height:16px;color:#111;white-space:pre;letter-spacing:0.29px;transform:scaleX(1.1300);transform-origin:0 0;">2018062112034110</div><div style="left:1287.0px;top:946.2px;width:285.3px;height:18.0px;background:#9a9a9a"></div><div style="left:1331.5px;top:948.0px;font-size:13px;line-height:16px;color:#111;white-space:pre;transform:scaleX(0.9863);transform-origin:0 0;">E2E_test_session.</div><div style="left:1437.7px;top:948.0px;font-size:13px;line-height:16px;color:#111;white-space:pre;letter-spacing:0.29px;transform:scaleX(1.1300);transform-origin:0 0;">2018062112034110</div><div style="left:1287.0px;top:964.2px;width:285.3px;height:18.0px;background:#9a9a9a"></div><div style="left:1331.5px;top:966.0px;font-size:13px;line-height:16px;color:#111;white-space:pre;transform:scaleX(0.9863);transform-origin:0 0;">E2E_test_session.</div><div style="left:1437.7px;top:966.0px;font-size:13px;line-height:16px;color:#111;white-space:pre;letter-spacing:0.29px;transform:scaleX(1.1300);transform-origin:0 0;">2018062112034110</div><div style="left:1287.0px;top:982.2px;width:285.3px;height:18.0px;background:#85eb85"></div><div style="left:1331.5px;top:984.0px;font-size:13px;line-height:16px;color:#111;white-space:pre;transform:scaleX(0.9863);transform-origin:0 0;">E2E_test_session.</div><div style="left:1437.7px;top:984.0px;font-size:13px;line-height:16px;color:#111;white-space:pre;letter-spacing:0.29px;transform:scaleX(1.1300);transform-origin:0 0;">2018062112034110</div><div style="left:1287.0px;top:1000.2px;width:285.3px;height:18.0px;background:#85eb85"></div><div style="left:1331.5px;top:1002.0px;font-size:13px;line-height:16px;color:#111;white-space:pre;transform:scaleX(0.9863);transform-origin:0 0;">E2E_test_session.</div><div style="left:1437.7px;top:1002.0px;font-size:13px;line-height:16px;color:#111;white-space:pre;letter-spacing:0.29px;transform:scaleX(1.1300);transform-origin:0 0;">2018062112034110</div><div style="left:1572.3px;top:786.0px;width:5.2px;height:247.0px;background:#ececec"></div><div style="left:1577.5px;top:786.0px;width:14.2px;height:247.0px;background:#f8f8f8"></div><div style="left:1287.0px;top:1033.0px;width:304.7px;height:8.0px;background:#dfdfdf"></div><div style="left:1187.0px;top:597.0px;width:413.0px;height:448.7px;border:1px solid #b7b7b7;border-left:none;border-top:none;box-sizing:border-box"></div><div style="left:0.0px;top:1144.0px;width:1620.0px;height:1.0px;background:#bababa"></div><div style="left:1324.8px;top:1148.0px;font-size:13px;line-height:16px;color:#111;white-space:pre;transform:scaleX(0.9356);transform-origin:0 0;">openSF</div><div style="left:1465.5px;top:1148.0px;width:1.2px;height:2.0px;background:#a8a8a8"></div><div style="left:1465.5px;top:1152.0px;width:1.2px;height:2.0px;background:#a8a8a8"></div><div style="left:1465.5px;top:1156.0px;width:1.2px;height:2.0px;background:#a8a8a8"></div><div style="left:1465.5px;top:1160.0px;width:1.2px;height:2.0px;background:#a8a8a8"></div><div style="left:1465.5px;top:1164.0px;width:1.2px;height:2.0px;background:#a8a8a8"></div><div style="left:1469.0px;top:1146.0px;width:133.5px;height:21.0px;background:#dedede;border-right:1px solid #b9b9b9;box-sizing:border-box"></div><div style="left:1469.0px;top:1146.0px;width:46.8px;height:21.0px;background:#9c9c9c"></div><div style="left:1496.8px;top:1150.0px;font-size:13px;line-height:16px;color:#111;white-space:pre;transform:scaleX(1.0847);transform-origin:0 0;">47M of 136M</div><svg style="left:1604.0px;top:1148.0px;" width="14" height="17" viewBox="0 0 14 17"><defs><linearGradient id="gtr" x1="0" x2="1"><stop offset="0" stop-color="#2f7fd0"/><stop offset="0.5" stop-color="#b9d86a"/><stop offset="1" stop-color="#2f7fd0"/></linearGradient></defs><path d="M2,4 L12,4 L11.2,15.5 L2.8,15.5 Z" fill="url(#gtr)" stroke="#1f66b0" stroke-width="0.9"/><rect x="1" y="2" width="12" height="2.2" rx="1" fill="#3f8fde" stroke="#1f66b0" stroke-width="0.7"/><rect x="5" y="0.8" width="4" height="1.4" fill="#2f7fd0"/><path d="M5,6 L5.3,14 M7,6 L7,14 M9,6 L8.7,14" stroke="#1f66b0" stroke-width="0.7" fill="none"/></svg></div><div class="win" style="left:1414px;top:79px;width:650px;height:783.6px;background:#e7e7e7;border-radius:5px;box-shadow:0 0 0 0.5px rgba(0,0,0,.28),0 8px 22px rgba(0,0,0,.36)"><div style="left:0.0px;top:0.0px;width:650.0px;height:22.0px;background:linear-gradient(#f7f7f7,#f3f3f3);border-bottom:1px solid #d2d2d2;box-sizing:border-box"></div><div style="left:8.0px;top:5.0px;width:12.0px;height:12.0px;border-radius:50%;background:#dcdcdc;border:0.5px solid #cbcbcb;box-sizing:border-box"></div><div style="left:28.0px;top:5.0px;width:12.0px;height:12.0px;border-radius:50%;background:#dcdcdc;border:0.5px solid #cbcbcb;box-sizing:border-box"></div><div style="left:48.0px;top:5.0px;width:12.0px;height:12.0px;border-radius:50%;background:#dcdcdc;border:0.5px solid #cbcbcb;box-sizing:border-box"></div><div style="left:293.2px;top:4.0px;font-size:13px;line-height:16px;color:#a9a9a9;white-space:pre;transform:scaleX(1.0149);transform-origin:0 0;">Parameter</div><div style="left:0.5px;top:22.0px;width:648.4px;height:769.0px;border-left:1px solid #a6a6a6;border-right:1px solid #a6a6a6;box-sizing:border-box"></div><div style="left:1.0px;top:45.0px;width:647.0px;height:1.0px;background:#a6a6a6"></div><div style="left:8.5px;top:23.0px;width:144.4px;height:23.0px;background:#e7e7e7;border:1px solid #a6a6a6;border-bottom:none;border-radius:3px 3px 0 0;box-sizing:border-box"></div><div style="left:12.2px;top:27.0px;font-size:11px;line-height:16px;color:#000;white-space:pre;transform:scaleX(1.0561);transform-origin:0 0;">Parameter test_parameter</div><div style="left:607.7px;top:28.0px;width:10.0px;height:4.0px;border:1px solid #000;box-sizing:border-box;background:#fff"></div><div style="left:629.6px;top:28.0px;width:10.0px;height:10.0px;border:1px solid #000;box-sizing:border-box;background:#fff"></div><div style="left:630.6px;top:30.0px;width:8.0px;height:1.0px;background:#000"></div><div style="left:21.5px;top:52.0px;font-size:11px;line-height:16px;color:#111;white-space:pre;transform:scaleX(1.0764);transform-origin:0 0;">Update Parameter Attributes</div><div style="left:11.3px;top:67.3px;width:627.7px;height:318.9px;background:#dedede;border-radius:4px;border:1px solid #d9d9d9;box-sizing:border-box"></div><div style="left:22.4px;top:79.0px;font-size:11px;line-height:16px;color:#000;white-space:pre;transform:scaleX(1.0340);transform-origin:0 0;">Name:</div><div style="left:187.8px;top:78.0px;width:237.8px;height:19.3px;background:#fff;border:1px solid #c6c6c6;box-sizing:border-box"></div><div style="left:191.8px;top:80.0px;font-size:11px;line-height:16px;color:#111;white-space:pre;transform:scaleX(1.0678);transform-origin:0 0;">test_parameter</div><div style="left:434.3px;top:81.5px;width:11.0px;height:11.0px;background:#fff;border:1px solid #b3b3b3;border-radius:2.5px;box-sizing:border-box"></div><svg style="left:434.3px;top:81.5px;" width="11" height="11" viewBox="0 0 11 11"><path d="M2.8,6 L5,8.6 L8.9,2.6" fill="none" stroke="#2a2a2a" stroke-width="1.5" stroke-linecap="round" stroke-linejoin="round"/></svg><div style="left:451.2px;top:79.0px;font-size:11px;line-height:16px;color:#000;white-space:pre;transform:scaleX(1.0504);transform-origin:0 0;">Show full name</div><div style="left:22.4px;top:103.0px;font-size:11px;line-height:16px;color:#000;white-space:pre;transform:scaleX(1.0847);transform-origin:0 0;">Description:</div><div style="left:187.8px;top:102.0px;width:442.1px;height:19.4px;background:#fff;border:1px solid #c6c6c6;box-sizing:border-box"></div><div style="left:191.8px;top:104.0px;font-size:11px;line-height:16px;color:#111;white-space:pre;transform:scaleX(1.0886);transform-origin:0 0;">questo e' un test</div><div style="left:27.6px;top:134.0px;font-size:11px;line-height:16px;color:#000;white-space:pre;transform:scaleX(1.0407);transform-origin:0 0;">Type:</div><div style="left:66.0px;top:132.3px;width:108.9px;height:18.0px;background:#fff;border:1px solid #c2c2c2;border-radius:4px;box-sizing:border-box;box-shadow:0 0.5px 0.5px rgba(0,0,0,.15)"></div><div style="left:73.8px;top:133.0px;font-size:11px;line-height:16px;color:#111;white-space:pre;transform:scaleX(0.9613);transform-origin:0 0;">INTEGER</div><svg style="left:163.3px;top:134.9px;" width="8" height="12" viewBox="0 0 8 12"><path d="M1.2,4.6 L4,1.8 L6.8,4.6 M1.2,7.4 L4,10.2 L6.8,7.4" fill="none" stroke="#3a3a3a" stroke-width="1.2" stroke-linecap="round" stroke-linejoin="round"/></svg><div style="left:195.2px;top:134.0px;font-size:11px;line-height:16px;color:#000;white-space:pre;transform:scaleX(1.0868);transform-origin:0 0;">Structured Type:</div><div style="left:294.0px;top:132.3px;width:96.5px;height:18.0px;background:#fff;border:1px solid #c2c2c2;border-radius:4px;box-sizing:border-box;box-shadow:0 0.5px 0.5px rgba(0,0,0,.15)"></div><div style="left:301.8px;top:133.0px;font-size:11px;line-height:16px;color:#111;white-space:pre;transform:scaleX(0.9546);transform-origin:0 0;">ARRAY</div><svg style="left:378.9px;top:134.9px;" width="8" height="12" viewBox="0 0 8 12"><path d="M1.2,4.6 L4,1.8 L6.8,4.6 M1.2,7.4 L4,10.2 L6.8,7.4" fill="none" stroke="#3a3a3a" stroke-width="1.2" stroke-linecap="round" stroke-linejoin="round"/></svg><div style="left:438.3px;top:134.0px;font-size:11px;line-height:16px;color:#000;white-space:pre;transform:scaleX(1.0525);transform-origin:0 0;">Dimensions:</div><div style="left:511.7px;top:135.0px;width:14.0px;height:14.0px;background:#fff;border:1px solid #b0b0b0;border-radius:50%;box-sizing:border-box"></div><div style="left:516.5px;top:139.8px;width:4.4px;height:4.4px;background:#333;border-radius:50%"></div><div style="left:530.4px;top:134.0px;font-size:11px;line-height:16px;color:#000;white-space:pre;transform:scaleX(1.0398);transform-origin:0 0;">2 D</div><div style="left:557.6px;top:135.0px;width:14.0px;height:14.0px;background:#fff;border:1px solid #b0b0b0;border-radius:50%;box-sizing:border-box"></div><div style="left:576.6px;top:134.0px;font-size:11px;line-height:16px;color:#000;white-space:pre;transform:scaleX(1.0165);transform-origin:0 0;">3 D</div><div style="left:33.2px;top:162.0px;font-size:11px;line-height:16px;color:#000;white-space:pre;transform:scaleX(1.0638);transform-origin:0 0;">Size Settings</div><div style="left:23.0px;top:177.3px;width:603.8px;height:84.4px;background:#d6d6d6;border-radius:4px;border:1px solid #d0d0d0;box-sizing:border-box"></div><div style="left:39.0px;top:196.0px;font-size:11px;line-height:16px;color:#000;white-space:pre;transform:scaleX(1.0546);transform-origin:0 0;">Columns:</div><div style="left:96.0px;top:194.5px;width:36.4px;height:18.7px;background:#fff;border:1px solid #c6c6c6;box-sizing:border-box"></div><div style="left:100.6px;top:197.0px;font-size:11px;line-height:16px;color:#111;white-space:pre;transform:scaleX(1.0800);transform-origin:0 0;">4</div><div style="left:135.7px;top:194.4px;width:9.8px;height:18.6px;background:#fff;border:1px solid #c2c2c2;border-radius:4.5px;box-sizing:border-box"></div><svg style="left:136.6px;top:196.7px;" width="8" height="14" viewBox="0 0 8 14"><path d="M1.6,5.4 L4,3 L6.4,5.4 M1.6,8.6 L4,11 L6.4,8.6" fill="none" stroke="#3a3a3a" stroke-width="1.1" stroke-linecap="round" stroke-linejoin="round"/></svg><div style="left:208.1px;top:196.0px;font-size:11px;line-height:16px;color:#000;white-space:pre;transform:scaleX(1.0143);transform-origin:0 0;">Rows:</div><div style="left:247.0px;top:194.5px;width:36.3px;height:18.7px;background:#fff;border:1px solid #c6c6c6;box-sizing:border-box"></div><div style="left:251.6px;top:197.0px;font-size:11px;line-height:16px;color:#111;white-space:pre;transform:scaleX(1.0800);transform-origin:0 0;">4</div><div style="left:286.7px;top:194.4px;width:9.8px;height:18.6px;background:#fff;border:1px solid #c2c2c2;border-radius:4.5px;box-sizing:border-box"></div><svg style="left:287.6px;top:196.7px;" width="8" height="14" viewBox="0 0 8 14"><path d="M1.6,5.4 L4,3 L6.4,5.4 M1.6,8.6 L4,11 L6.4,8.6" fill="none" stroke="#3a3a3a" stroke-width="1.1" stroke-linecap="round" stroke-linejoin="round"/></svg><div style="left:40.0px;top:233.7px;width:11.0px;height:11.0px;background:#fff;border:1px solid #b3b3b3;border-radius:2.5px;box-sizing:border-box"></div><div style="left:57.5px;top:231.0px;font-size:11px;line-height:16px;color:#000;white-space:pre;transform:scaleX(1.0281);transform-origin:0 0;">Column Pos</div><div style="left:127.4px;top:230.3px;width:63.2px;height:18.9px;background:#fff;border:1px solid #c6c6c6;box-sizing:border-box"></div><div style="left:209.0px;top:233.7px;width:11.0px;height:11.0px;background:#fff;border:1px solid #b3b3b3;border-radius:2.5px;box-sizing:border-box"></div><div style="left:226.3px;top:231.0px;font-size:11px;line-height:16px;color:#000;white-space:pre;">Row Pos</div><div style="left:278.0px;top:230.3px;width:63.5px;height:18.9px;background:#fff;border:1px solid #c6c6c6;box-sizing:border-box"></div><div style="left:27.3px;top:277.0px;font-size:11px;line-height:16px;color:#000;white-space:pre;transform:scaleX(1.0586);transform-origin:0 0;">Min:</div><div style="left:57.2px;top:276.2px;width:63.5px;height:18.9px;background:#fff;border:1px solid #c6c6c6;box-sizing:border-box"></div><div style="left:61.5px;top:278.0px;font-size:11px;line-height:16px;color:#111;white-space:pre;transform:scaleX(1.0800);transform-origin:0 0;">-5</div><div style="left:195.2px;top:277.0px;font-size:11px;line-height:16px;color:#000;white-space:pre;transform:scaleX(1.0194);transform-origin:0 0;">Max:</div><div style="left:227.2px;top:276.2px;width:63.2px;height:18.9px;background:#fff;border:1px solid #c6c6c6;box-sizing:border-box"></div><div style="left:231.6px;top:278.0px;font-size:11px;line-height:16px;color:#111;white-space:pre;letter-spacing:0.08px;transform:scaleX(1.1300);transform-origin:0 0;">256</div><div style="left:438.3px;top:277.0px;font-size:11px;line-height:16px;color:#000;white-space:pre;transform:scaleX(1.0669);transform-origin:0 0;">Units:</div><div style="left:476.2px;top:276.2px;width:63.4px;height:18.9px;background:#fff;border:1px solid #c6c6c6;box-sizing:border-box"></div><div style="left:480.5px;top:278.0px;font-size:11px;line-height:16px;color:#111;white-space:pre;transform:scaleX(1.0800);transform-origin:0 0;">m</div><div style="left:27.3px;top:309.0px;font-size:11px;line-height:16px;color:#000;white-space:pre;transform:scaleX(1.0206);transform-origin:0 0;">Value:</div><div style="left:69.8px;top:309.0px;font-size:11px;line-height:16px;color:#000;white-space:pre;letter-spacing:0.26px;transform:scaleX(1.1300);transform-origin:0 0;">[[0,4,7,1],[0,1,4,2],[-1,39,3,11],[9,99,34,-4]]</div><div style="left:21.5px;top:395.0px;font-size:11px;line-height:16px;color:#111;white-space:pre;transform:scaleX(1.0528);transform-origin:0 0;">Update Parameter Values</div><div style="left:11.2px;top:410.4px;width:628.0px;height:319.3px;background:#dedede;border-radius:4px;border:1px solid #d9d9d9;box-sizing:border-box"></div><div style="left:20.2px;top:421.4px;width:609.8px;height:302.4px;border:1px solid #a6a6a6;border-radius:3px 3px 0 0;box-sizing:border-box"></div><div style="left:67.4px;top:421.9px;width:1.0px;height:17.1px;background:#a6a6a6"></div><div style="left:67.4px;top:438.0px;width:561.6px;height:1.0px;background:#a6a6a6"></div><div style="left:21.2px;top:439.0px;width:2.0px;height:283.8px;background:#f2f2f2"></div><div style="left:21.2px;top:720.8px;width:607.8px;height:2.0px;background:#f2f2f2"></div><div style="left:627.0px;top:439.0px;width:2.0px;height:283.8px;background:#f2f2f2"></div><div style="left:24.0px;top:423.0px;font-size:11px;line-height:16px;color:#000;white-space:pre;transform:scaleX(1.0411);transform-origin:0 0;">Layer 1</div><div style="left:28.0px;top:447.0px;width:589.3px;height:15.5px;background:#fff;border-bottom:1px solid #cfcfcf;box-sizing:border-box"></div><div style="left:28.0px;top:462.5px;width:324.5px;height:60.5px;background:#fff"></div><div style="left:28.0px;top:462.5px;width:24.2px;height:60.5px;background:#f1f1f1"></div><div style="left:28.0px;top:523.0px;width:324.5px;height:14.6px;background:#edeeef"></div><div style="left:52.2px;top:450.0px;width:1.0px;height:10.0px;background:#dadada"></div><div style="left:52.2px;top:462.5px;width:1.0px;height:75.1px;background:#b9b9b9"></div><div style="left:127.4px;top:450.0px;width:1.0px;height:10.0px;background:#dadada"></div><div style="left:127.4px;top:462.5px;width:1.0px;height:75.1px;background:#b9b9b9"></div><div style="left:202.4px;top:450.0px;width:1.0px;height:10.0px;background:#dadada"></div><div style="left:202.4px;top:462.5px;width:1.0px;height:75.1px;background:#b9b9b9"></div><div style="left:277.6px;top:450.0px;width:1.0px;height:10.0px;background:#dadada"></div><div style="left:277.6px;top:462.5px;width:1.0px;height:75.1px;background:#b9b9b9"></div><div style="left:352.5px;top:450.0px;width:1.0px;height:10.0px;background:#dadada"></div><div style="left:352.5px;top:462.5px;width:1.0px;height:75.1px;background:#b9b9b9"></div><div style="left:86.1px;top:446.0px;font-size:11px;line-height:16px;color:#111;white-space:pre;transform:scaleX(1.1300);transform-origin:0 0;">1</div><div style="left:161.3px;top:446.0px;font-size:11px;line-height:16px;color:#111;white-space:pre;transform:scaleX(1.1300);transform-origin:0 0;">2</div><div style="left:236.3px;top:446.0px;font-size:11px;line-height:16px;color:#111;white-space:pre;transform:scaleX(1.1300);transform-origin:0 0;">3</div><div style="left:311.5px;top:446.0px;font-size:11px;line-height:16px;color:#111;white-space:pre;transform:scaleX(1.1300);transform-origin:0 0;">4</div><div style="left:36.5px;top:462.0px;font-size:11px;line-height:16px;color:#111;white-space:pre;transform:scaleX(1.0800);transform-origin:0 0;">1</div><div style="left:86.1px;top:462.0px;font-size:11px;line-height:16px;color:#111;white-space:pre;transform:scaleX(1.1300);transform-origin:0 0;">0</div><div style="left:161.3px;top:462.0px;font-size:11px;line-height:16px;color:#111;white-space:pre;transform:scaleX(1.1300);transform-origin:0 0;">4</div><div style="left:236.3px;top:462.0px;font-size:11px;line-height:16px;color:#111;white-space:pre;transform:scaleX(1.1300);transform-origin:0 0;">7</div><div style="left:311.5px;top:462.0px;font-size:11px;line-height:16px;color:#111;white-space:pre;transform:scaleX(1.1300);transform-origin:0 0;">1</div><div style="left:36.5px;top:477.0px;font-size:11px;line-height:16px;color:#111;white-space:pre;transform:scaleX(1.0800);transform-origin:0 0;">2</div><div style="left:86.1px;top:477.0px;font-size:11px;line-height:16px;color:#111;white-space:pre;transform:scaleX(1.1300);transform-origin:0 0;">0</div><div style="left:161.3px;top:477.0px;font-size:11px;line-height:16px;color:#111;white-space:pre;transform:scaleX(1.1300);transform-origin:0 0;">1</div><div style="left:236.3px;top:477.0px;font-size:11px;line-height:16px;color:#111;white-space:pre;transform:scaleX(1.1300);transform-origin:0 0;">4</div><div style="left:311.5px;top:477.0px;font-size:11px;line-height:16px;color:#111;white-space:pre;transform:scaleX(1.1300);transform-origin:0 0;">2</div><div style="left:36.5px;top:492.0px;font-size:11px;line-height:16px;color:#111;white-space:pre;transform:scaleX(1.0800);transform-origin:0 0;">3</div><div style="left:84.1px;top:492.0px;font-size:11px;line-height:16px;color:#111;white-space:pre;transform:scaleX(1.1300);transform-origin:0 0;">-1</div><div style="left:157.9px;top:492.0px;font-size:11px;line-height:16px;color:#111;white-space:pre;transform:scaleX(1.1300);transform-origin:0 0;">39</div><div style="left:236.3px;top:492.0px;font-size:11px;line-height:16px;color:#111;white-space:pre;transform:scaleX(1.1300);transform-origin:0 0;">3</div><div style="left:308.5px;top:492.0px;font-size:11px;line-height:16px;color:#111;white-space:pre;transform:scaleX(1.1300);transform-origin:0 0;">11</div><div style="left:36.5px;top:507.0px;font-size:11px;line-height:16px;color:#111;white-space:pre;transform:scaleX(1.0800);transform-origin:0 0;">4</div><div style="left:86.1px;top:507.0px;font-size:11px;line-height:16px;color:#111;white-space:pre;transform:scaleX(1.1300);transform-origin:0 0;">9</div><div style="left:157.9px;top:507.0px;font-size:11px;line-height:16px;color:#111;white-space:pre;transform:scaleX(1.1300);transform-origin:0 0;">99</div><div style="left:232.9px;top:507.0px;font-size:11px;line-height:16px;color:#111;white-space:pre;transform:scaleX(1.1300);transform-origin:0 0;">34</div><div style="left:309.5px;top:507.0px;font-size:11px;line-height:16px;color:#111;white-space:pre;transform:scaleX(1.1300);transform-origin:0 0;">-4</div><div style="left:18.3px;top:748.0px;width:114.3px;height:18.0px;background:#fff;border:1px solid #c4c4c4;border-radius:4px;box-sizing:border-box;box-shadow:0 0.5px 0.5px rgba(0,0,0,.18)"></div><div style="left:29.9px;top:749.0px;font-size:11px;line-height:16px;color:#111;white-space:pre;transform:scaleX(1.0555);transform-origin:0 0;">Accept and Close</div><div style="left:148.4px;top:748.0px;width:57.1px;height:18.0px;background:#fff;border:1px solid #c4c4c4;border-radius:4px;box-sizing:border-box;box-shadow:0 0.5px 0.5px rgba(0,0,0,.18)"></div><div style="left:159.2px;top:749.0px;font-size:11px;line-height:16px;color:#111;white-space:pre;transform:scaleX(1.0367);transform-origin:0 0;">Cancel</div></div><div class="win" style="left:71px;top:367px;width:1268.5px;height:949.5px;background:#e7e7e7;border-radius:5px;box-shadow:0 0 0 0.5px rgba(0,0,0,.28),0 8px 22px rgba(0,0,0,.36)"><div style="left:0.0px;top:0.0px;width:1269.0px;height:21.5px;background:linear-gradient(#f7f7f7,#f3f3f3);border-bottom:1px solid #d2d2d2;box-sizing:border-box"></div><div style="left:8.0px;top:5.0px;width:12.0px;height:12.0px;border-radius:50%;background:#dcdcdc;border:0.5px solid #cbcbcb;box-sizing:border-box"></div><div style="left:28.0px;top:5.0px;width:12.0px;height:12.0px;border-radius:50%;background:#dcdcdc;border:0.5px solid #cbcbcb;box-sizing:border-box"></div><div style="left:48.0px;top:5.0px;width:12.0px;height:12.0px;border-radius:50%;background:#dcdcdc;border:0.5px solid #cbcbcb;box-sizing:border-box"></div><div style="left:585.7px;top:4.0px;font-size:13px;line-height:16px;color:#a9a9a9;white-space:pre;transform:scaleX(1.0248);transform-origin:0 0;">ParameterEditor</div><div style="left:164.0px;top:24.0px;width:1.0px;height:26.5px;background:#d2d2d2"></div><div style="left:303.8px;top:24.0px;width:1.0px;height:26.5px;background:#d2d2d2"></div><div style="left:1.8px;top:27.0px;width:1.6px;height:2.2px;background:#a39c88"></div><div style="left:1.8px;top:33.2px;width:1.6px;height:2.2px;background:#a39c88"></div><div style="left:1.8px;top:39.4px;width:1.6px;height:2.2px;background:#a39c88"></div><div style="left:1.8px;top:45.6px;width:1.6px;height:2.2px;background:#a39c88"></div><svg style="left:5.9px;top:23.8px;" width="24" height="26" viewBox="0 0 24 26"><rect x="4" y="6" width="14.5" height="16" fill="#f4f4f4" stroke="#b9b9b9" stroke-width="1"/><circle cx="16" cy="8.5" r="5.4" fill="#fff27a" opacity="0.85"/><path d="M16,4 L17.3,7 L20.5,7.3 L18,9.4 L18.8,12.6 L16,10.9 L13.2,12.6 L14,9.4 L11.5,7.3 L14.7,7 Z" fill="#fff" stroke="#e7c500" stroke-width="0.8"/></svg><svg style="left:32.3px;top:23.8px;" width="24" height="26" viewBox="0 0 24 26"><path d="M7,4.5 L16,4.5 L18,7 L18,13 L7,13 Z" fill="#ededed" stroke="#b0b0b0" stroke-width="0.8"/><path d="M3.5,11 L3.5,21.5 L20.5,21.5 L20.5,9.5 L12,9.5 L10,11 Z" fill="#e7a336" stroke="#b9761b" stroke-width="0.9"/><path d="M3.5,14 L20.5,14" stroke="#f3c068" stroke-width="1"/></svg><svg style="left:58.0px;top:23.8px;" width="24" height="26" viewBox="0 0 24 26"><rect x="3.5" y="5" width="17" height="17" rx="1" fill="#3b3b3b" stroke="#1e1e1e" stroke-width="0.8"/><rect x="6" y="5.4" width="12" height="8" fill="#dfeaf6"/><path d="M6,7.5 L18,7.5 M6,9.5 L18,9.5 M6,11.5 L18,11.5" stroke="#b9cde4" stroke-width="0.8"/><rect x="7.5" y="16" width="9" height="6" fill="#8c8c8c"/><rect x="9" y="17" width="2.4" height="4" fill="#2b2b2b"/></svg><svg style="left:84.5px;top:23.8px;" width="24" height="26" viewBox="0 0 24 26"><rect x="3.5" y="5" width="17" height="17" rx="1" fill="#3b3b3b" stroke="#1e1e1e" stroke-width="0.8"/><rect x="6" y="5.4" width="12" height="8" fill="#dfeaf6"/><path d="M6,7.5 L18,7.5 M6,9.5 L18,9.5 M6,11.5 L18,11.5" stroke="#b9cde4" stroke-width="0.8"/><rect x="7.5" y="16" width="9" height="6" fill="#8c8c8c"/><rect x="9" y="17" width="2.4" height="4" fill="#2b2b2b"/><path d="M3,22 L4.6,17.5 L17,4.2 L20,7 L7.6,20.5 Z" fill="#e9b82b" stroke="#7a5a0d" stroke-width="0.8"/><path d="M17,4.2 L20,7 L21.3,5.3 L18.6,2.8 Z" fill="#d4483b"/><path d="M3,22 L4.6,17.5 L7.6,20.5 Z" fill="#3a2a14"/></svg><svg style="left:111.0px;top:23.8px;" width="24" height="26" viewBox="0 0 24 26"><rect x="4.5" y="4" width="14" height="17.5" fill="#f7f7f7" stroke="#d1d1d1" stroke-width="1"/><path d="M14,16 L20.5,22.5 M20.5,16 L14,22.5" stroke="#d92b2b" stroke-width="2.6" stroke-linecap="round"/></svg><svg style="left:135.9px;top:23.8px;" width="24" height="26" viewBox="0 0 24 26"><path d="M2.5,13.2 L6,10.2 L10,15 L19.5,4.8 L22,7 L10.2,21 Z" fill="#2fae1e" stroke="#1b7a10" stroke-width="0.8"/></svg><svg style="left:167.6px;top:23.8px;" width="24" height="26" viewBox="0 0 24 26"><g transform="translate(12,13)"><path d="M0,-10 L2.2,-9.7 L3,-7.2 L5.3,-8.7 L7.2,-7 L5.9,-4.6 L9,-4.2 L9.9,-1.7 L7.4,-0.3 L9.8,1.9 L8.8,4.4 L5.9,4.2 L7,7 L5,8.7 L2.8,7 L1.9,9.8 L-0.8,10 L-1.9,7.3 L-4.4,8.9 L-6.6,7.4 L-5.7,4.6 L-8.7,4.7 L-9.9,2.2 L-7.6,0.4 L-10,-1.5 L-9.3,-4.1 L-6.2,-4.1 L-7.4,-6.8 L-5.5,-8.6 L-3,-7.2 L-2.4,-9.8 Z" fill="#d9d9d9" stroke="#9b9b9b" stroke-width="0.9"/><circle r="5" fill="#24509f" stroke="#e9eef8" stroke-width="1.2"/><path d="M-1.6,-2.6 L2.8,0 L-1.6,2.6 Z" fill="#fff"/></g></svg><svg style="left:196.3px;top:23.8px;" width="24" height="26" viewBox="0 0 24 26"><path d="M9,7 L9,20 L15,20 M9,11.5 L15,11.5" fill="none" stroke="#8a8a8a" stroke-width="1.1"/><rect x="1.5" y="2" width="8.5" height="8" rx="1.6" fill="#5db52e" stroke="#3c8c16" stroke-width="0.8"/><rect x="14.5" y="7.5" width="7.5" height="7.5" rx="1.6" fill="#2f8fe0" stroke="#1c6db8" stroke-width="0.8"/><rect x="14.5" y="17" width="7.5" height="7.5" rx="1.6" fill="#f7c51f" stroke="#c79a08" stroke-width="0.8"/></svg><svg style="left:223.5px;top:23.8px;" width="24" height="26" viewBox="0 0 24 26"><path d="M3,4.5 L11,4.5 L13.5,7 L13.5,18.5 L3,18.5 Z" fill="#eef5e6" stroke="#86b05c" stroke-width="1"/><path d="M5,8 L8,8 M5,11 L8,11 M5,14 L8,14" stroke="#86b05c" stroke-width="1"/><path d="M8.5,8 L16.5,8 L20.5,12 L20.5,23 L8.5,23 Z" fill="#fff" stroke="#222" stroke-width="1.6"/><path d="M11,13 L15,13 M11,16 L18,16 M11,18.5 L18,18.5 M11,21 L18,21" stroke="#222" stroke-width="1.3"/></svg><svg style="left:250.0px;top:23.8px;" width="24" height="26" viewBox="0 0 24 26"><rect x="4" y="6" width="16" height="17" rx="1.5" fill="#dcc9a6" stroke="#b9a47d" stroke-width="1"/><rect x="6" y="8" width="12" height="13" fill="#f3f0ea"/><rect x="8.5" y="3.5" width="7" height="4" rx="1" fill="#c9c9c9" stroke="#9f9f9f" stroke-width="0.8"/><path d="M8,12 L16,12 M8,15 L16,15 M8,18 L13,18" stroke="#e0dbd0" stroke-width="1"/></svg><svg style="left:275.7px;top:23.8px;" width="24" height="26" viewBox="0 0 24 26"><path d="M6.8,7.4 L17.4,19 M17.4,7.4 L6.8,19" stroke="#8f1010" stroke-width="4.6" stroke-linecap="round"/><path d="M6.8,7.4 L17.4,19 M17.4,7.4 L6.8,19" stroke="#d92222" stroke-width="3.2" stroke-linecap="round"/></svg><svg style="left:309.7px;top:23.8px;" width="24" height="26" viewBox="0 0 24 26"><rect x="4" y="1.5" width="14" height="22" fill="#eef0ec" stroke="#9aa596" stroke-width="1.2"/><path d="M6.5,5 L15.5,5 M6.5,7.5 L15.5,7.5 M6.5,10 L15.5,10 M6.5,12.5 L15.5,12.5 M6.5,15 L15.5,15 M6.5,17.5 L12,17.5" stroke="#9aa596" stroke-width="1.2"/><path d="M12.5,16.5 L16.5,15 L20.5,16.5 L20.5,20.5 Q20.5,23.5 16.5,25.5 Q12.5,23.5 12.5,20.5 Z" fill="#e8ebe6" stroke="#8e9a8a" stroke-width="1.2"/><rect x="15" y="18.5" width="3" height="3" fill="none" stroke="#8e9a8a" stroke-width="0.9"/></svg><svg style="left:339.2px;top:23.8px;" width="24" height="26" viewBox="0 0 24 26"><path d="M6,23 C18,23 16,15 12.5,12.5 C8,9 8.5,2.5 21,4.5" fill="none" stroke="#5a8fd6" stroke-width="1.3"/><path d="M4.5,4.5 L12.5,12.5 L19.5,21" stroke="#d07a8a" stroke-width="0.9" stroke-dasharray="1.6 1.2" fill="none"/><circle cx="4.5" cy="4.5" r="1.7" fill="#fff" stroke="#d84a5a" stroke-width="0.9"/><circle cx="19.5" cy="21" r="1.7" fill="#fff" stroke="#d84a5a" stroke-width="0.9"/><rect x="10.6" y="10.6" width="3.8" height="3.8" fill="#e0262f"/><circle cx="22" cy="7.5" r="2" fill="#4d84c9"/><circle cx="5.5" cy="23" r="2" fill="#2f6fc0"/></svg><div style="left:0.5px;top:52.0px;width:315.5px;height:318.0px;border:1px solid #a6a6a6;border-radius:3px 3px 0 0;box-sizing:border-box"></div><div style="left:89.4px;top:52.5px;width:1.0px;height:23.0px;background:#a6a6a6"></div><div style="left:89.4px;top:74.5px;width:225.6px;height:1.0px;background:#a6a6a6"></div><div style="left:4.3px;top:57.0px;font-size:11px;line-height:16px;color:#111;white-space:pre;transform:scaleX(1.0395);transform-origin:0 0;">Parameter Files</div><div style="left:274.0px;top:58.0px;width:10.0px;height:4.0px;border:1px solid #000;box-sizing:border-box;background:#fff"></div><div style="left:295.9px;top:58.0px;width:10.0px;height:10.0px;border:1px solid #000;box-sizing:border-box;background:#fff"></div><div style="left:296.9px;top:60.0px;width:8.0px;height:1.0px;background:#000"></div><div style="left:1.5px;top:75.5px;width:2.0px;height:293.5px;background:#f3f3f3"></div><div style="left:1.5px;top:367.0px;width:313.5px;height:2.0px;background:#f3f3f3"></div><div style="left:313.0px;top:75.5px;width:2.0px;height:293.5px;background:#f3f3f3"></div><div style="left:8.0px;top:83.0px;width:300.0px;height:280.4px;background:#fff"></div><div style="left:8.0px;top:84.0px;width:300.0px;height:13.0px;background:#d4d4d4"></div><div style="left:10.0px;top:82.0px;font-size:11px;line-height:16px;color:#111;white-space:pre;transform:scaleX(1.0700);transform-origin:0 0;">timelinescenarioworkshop.xml</div><div style="left:10.0px;top:97.0px;font-size:11px;line-height:16px;color:#111;white-space:pre;transform:scaleX(1.0478);transform-origin:0 0;">param.xml</div><div style="left:0.5px;top:375.4px;width:315.5px;height:317.6px;border:1px solid #a6a6a6;border-radius:3px 3px 0 0;box-sizing:border-box"></div><div style="left:64.4px;top:375.9px;width:1.0px;height:23.1px;background:#a6a6a6"></div><div style="left:64.4px;top:398.0px;width:250.6px;height:1.0px;background:#a6a6a6"></div><div style="left:4.3px;top:380.0px;font-size:11px;line-height:16px;color:#111;white-space:pre;transform:scaleX(1.0109);transform-origin:0 0;">Rules Files</div><div style="left:274.0px;top:381.0px;width:10.0px;height:4.0px;border:1px solid #000;box-sizing:border-box;background:#fff"></div><div style="left:295.9px;top:381.0px;width:10.0px;height:10.0px;border:1px solid #000;box-sizing:border-box;background:#fff"></div><div style="left:296.9px;top:383.0px;width:8.0px;height:1.0px;background:#000"></div><div style="left:1.5px;top:399.0px;width:2.0px;height:293.0px;background:#f3f3f3"></div><div style="left:1.5px;top:690.0px;width:313.5px;height:2.0px;background:#f3f3f3"></div><div style="left:313.0px;top:399.0px;width:2.0px;height:293.0px;background:#f3f3f3"></div><div style="left:8.0px;top:406.0px;width:300.0px;height:280.2px;background:#fff"></div><div style="left:320.0px;top:52.0px;width:948.6px;height:641.0px;border:1px solid #a6a6a6;border-radius:3px 3px 0 0;box-sizing:border-box"></div><div style="left:391.0px;top:52.5px;width:1.0px;height:23.0px;background:#a6a6a6"></div><div style="left:391.0px;top:74.5px;width:876.6px;height:1.0px;background:#a6a6a6"></div><div style="left:324.2px;top:57.0px;font-size:11px;line-height:16px;color:#111;white-space:pre;transform:scaleX(1.0622);transform-origin:0 0;">File Content</div><div style="left:1227.0px;top:58.0px;width:10.0px;height:4.0px;border:1px solid #000;box-sizing:border-box;background:#fff"></div><div style="left:1248.9px;top:58.0px;width:10.0px;height:10.0px;border:1px solid #000;box-sizing:border-box;background:#fff"></div><div style="left:1249.9px;top:60.0px;width:8.0px;height:1.0px;background:#000"></div><div style="left:321.0px;top:75.5px;width:2.0px;height:616.5px;background:#f3f3f3"></div><div style="left:321.0px;top:690.0px;width:946.6px;height:2.0px;background:#f3f3f3"></div><div style="left:1265.6px;top:75.5px;width:2.0px;height:616.5px;background:#f3f3f3"></div><div style="left:323.0px;top:78.0px;width:942.8px;height:612.5px;border:1px solid #a6a6a6;border-radius:3px 3px 0 0;box-sizing:border-box"></div><div style="left:432.0px;top:78.5px;width:1.0px;height:17.5px;background:#a6a6a6"></div><div style="left:603.0px;top:78.5px;width:1.0px;height:17.5px;background:#a6a6a6"></div><div style="left:432.0px;top:95.2px;width:833.0px;height:1.0px;background:#a6a6a6"></div><div style="left:324.0px;top:96.2px;width:2.0px;height:593.3px;background:#f3f3f3"></div><div style="left:324.0px;top:687.5px;width:940.8px;height:2.0px;background:#f3f3f3"></div><div style="left:1262.8px;top:96.2px;width:2.0px;height:593.3px;background:#f3f3f3"></div><div style="left:327.1px;top:80.0px;font-size:11px;line-height:16px;color:#111;white-space:pre;transform:scaleX(1.0814);transform-origin:0 0;">Timeline (modified)</div><div style="left:437.2px;top:80.0px;font-size:11px;line-height:16px;color:#111;white-space:pre;transform:scaleX(1.0491);transform-origin:0 0;">MyModule_Local_Configuration</div><div style="left:334.0px;top:107.0px;width:457.3px;height:17.5px;background:#fff;border:1px solid #c6c6c6;border-radius:4px;box-sizing:border-box"></div><svg style="left:340.0px;top:110.5px;" width="12" height="12" viewBox="0 0 12 12"><circle cx="5" cy="5" r="3.6" fill="none" stroke="#555" stroke-width="1"/><path d="M7.6,7.8 L10.6,11" stroke="#555" stroke-width="1.2" stroke-linecap="round"/></svg><div style="left:354.4px;top:108.0px;font-size:11px;line-height:16px;color:#bdbdbd;white-space:pre;transform:scaleX(1.0362);transform-origin:0 0;">Search Parameter</div><div style="left:334.0px;top:141.0px;width:920.5px;height:537.5px;background:#fff;border:1px solid #d4d4d4;box-sizing:border-box"></div><div style="left:335.0px;top:155.7px;width:918.5px;height:1.0px;background:#d6d6d6"></div><div style="left:584.0px;top:143.5px;width:1.0px;height:10.5px;background:#d9d9d9"></div><div style="left:834.0px;top:143.5px;width:1.0px;height:10.5px;background:#d9d9d9"></div><div style="left:337.4px;top:140.0px;font-size:11px;line-height:16px;color:#111;white-space:pre;">Name</div><div style="left:587.8px;top:140.0px;font-size:11px;line-height:16px;color:#111;white-space:pre;transform:scaleX(1.0064);transform-origin:0 0;">Type</div><div style="left:837.4px;top:140.0px;font-size:11px;line-height:16px;color:#111;white-space:pre;transform:scaleX(1.0269);transform-origin:0 0;">Values</div><div style="left:335.0px;top:648.3px;width:904.5px;height:13.7px;background:#d4d4d4"></div><svg style="left:342.9px;top:156.3px;" width="8.8" height="7.2" viewBox="0 0 8.8 7.2"><path d="M0,0 L8.8,0 L4.4,7.2 Z" fill="#7f7f7f"/></svg><div style="left:352.9px;top:152.0px;font-size:11px;line-height:16px;color:#111;white-space:pre;transform:scaleX(1.0343);transform-origin:0 0;">Parameters Root</div><svg style="left:358.9px;top:171.3px;" width="8.8" height="7.2" viewBox="0 0 8.8 7.2"><path d="M0,0 L8.8,0 L4.4,7.2 Z" fill="#7f7f7f"/></svg><div style="left:368.9px;top:167.0px;font-size:11px;line-height:16px;color:#111;white-space:pre;transform:scaleX(1.0696);transform-origin:0 0;">TimeConfiguration</div><div style="left:384.9px;top:182.0px;font-size:11px;line-height:16px;color:#f80f1c;white-space:pre;transform:scaleX(1.0958);transform-origin:0 0;">InitialEpoch [1x1]</div><div style="left:587.8px;top:182.0px;font-size:11px;line-height:16px;color:#f80f1c;white-space:pre;transform:scaleX(0.9248);transform-origin:0 0;">TIME</div><div style="left:837.4px;top:182.0px;font-size:11px;line-height:16px;color:#f80f1c;white-space:pre;letter-spacing:0.10px;transform:scaleX(1.1300);transform-origin:0 0;">20180615T15:49:02:927</div><div style="left:384.9px;top:197.0px;font-size:11px;line-height:16px;color:#111;white-space:pre;transform:scaleX(1.0834);transform-origin:0 0;">DefaultTimeSegmentDuration [1x1]</div><div style="left:587.8px;top:197.0px;font-size:11px;line-height:16px;color:#111;white-space:pre;transform:scaleX(0.9306);transform-origin:0 0;">INTEGER</div><div style="left:837.4px;top:197.0px;font-size:11px;line-height:16px;color:#111;white-space:pre;transform:scaleX(1.1169);transform-origin:0 0;">300</div><svg style="left:358.9px;top:216.3px;" width="8.8" height="7.2" viewBox="0 0 8.8 7.2"><path d="M0,0 L8.8,0 L4.4,7.2 Z" fill="#7f7f7f"/></svg><div style="left:368.9px;top:212.0px;font-size:11px;line-height:16px;color:#111;white-space:pre;transform:scaleX(1.0800);transform-origin:0 0;">TimeSegments</div><svg style="left:374.9px;top:231.3px;" width="8.8" height="7.2" viewBox="0 0 8.8 7.2"><path d="M0,0 L8.8,0 L4.4,7.2 Z" fill="#7f7f7f"/></svg><div style="left:384.9px;top:227.0px;font-size:11px;line-height:16px;color:#111;white-space:pre;transform:scaleX(1.0800);transform-origin:0 0;">TimeSegment</div><div style="left:400.9px;top:242.0px;font-size:11px;line-height:16px;color:#f80f1c;white-space:pre;transform:scaleX(1.0827);transform-origin:0 0;">TimeSegmentStartTime [1x1]</div><div style="left:587.8px;top:242.0px;font-size:11px;line-height:16px;color:#f80f1c;white-space:pre;transform:scaleX(0.9248);transform-origin:0 0;">TIME</div><div style="left:837.4px;top:242.0px;font-size:11px;line-height:16px;color:#f80f1c;white-space:pre;letter-spacing:0.10px;transform:scaleX(1.1300);transform-origin:0 0;">20180615T15:49:02:927</div><div style="left:400.9px;top:257.0px;font-size:11px;line-height:16px;color:#111;white-space:pre;transform:scaleX(1.0809);transform-origin:0 0;">TimeSegmentDuration [1x1]</div><div style="left:587.8px;top:257.0px;font-size:11px;line-height:16px;color:#111;white-space:pre;transform:scaleX(0.9306);transform-origin:0 0;">INTEGER</div><div style="left:837.4px;top:257.0px;font-size:11px;line-height:16px;color:#111;white-space:pre;transform:scaleX(1.1169);transform-origin:0 0;">300</div><div style="left:400.9px;top:272.0px;font-size:11px;line-height:16px;color:#111;white-space:pre;transform:scaleX(1.1080);transform-origin:0 0;">Active [1x1]</div><div style="left:587.8px;top:272.0px;font-size:11px;line-height:16px;color:#111;white-space:pre;transform:scaleX(0.9645);transform-origin:0 0;">BOOLEAN</div><div style="left:837.4px;top:272.0px;font-size:11px;line-height:16px;color:#111;white-space:pre;transform:scaleX(0.9317);transform-origin:0 0;">TRUE</div><div style="left:400.9px;top:287.0px;font-size:11px;line-height:16px;color:#f80f1c;white-space:pre;transform:scaleX(1.0827);transform-origin:0 0;">TimeSegmentStartTime [1x1]</div><div style="left:587.8px;top:287.0px;font-size:11px;line-height:16px;color:#f80f1c;white-space:pre;transform:scaleX(0.9248);transform-origin:0 0;">TIME</div><div style="left:837.4px;top:287.0px;font-size:11px;line-height:16px;color:#f80f1c;white-space:pre;letter-spacing:0.10px;transform:scaleX(1.1300);transform-origin:0 0;">20180615T15:54:02:927</div><div style="left:400.9px;top:302.0px;font-size:11px;line-height:16px;color:#111;white-space:pre;transform:scaleX(1.0809);transform-origin:0 0;">TimeSegmentDuration [1x1]</div><div style="left:587.8px;top:302.0px;font-size:11px;line-height:16px;color:#111;white-space:pre;transform:scaleX(0.9306);transform-origin:0 0;">INTEGER</div><div style="left:837.4px;top:302.0px;font-size:11px;line-height:16px;color:#111;white-space:pre;transform:scaleX(1.1169);transform-origin:0 0;">300</div><div style="left:400.9px;top:317.0px;font-size:11px;line-height:16px;color:#111;white-space:pre;transform:scaleX(1.1080);transform-origin:0 0;">Active [1x1]</div><div style="left:587.8px;top:317.0px;font-size:11px;line-height:16px;color:#111;white-space:pre;transform:scaleX(0.9645);transform-origin:0 0;">BOOLEAN</div><div style="left:837.4px;top:317.0px;font-size:11px;line-height:16px;color:#111;white-space:pre;transform:scaleX(0.9317);transform-origin:0 0;">TRUE</div><div style="left:400.9px;top:332.0px;font-size:11px;line-height:16px;color:#f80f1c;white-space:pre;transform:scaleX(1.0827);transform-origin:0 0;">TimeSegmentStartTime [1x1]</div><div style="left:587.8px;top:332.0px;font-size:11px;line-height:16px;color:#f80f1c;white-space:pre;transform:scaleX(0.9248);transform-origin:0 0;">TIME</div><div style="left:837.4px;top:332.0px;font-size:11px;line-height:16px;color:#f80f1c;white-space:pre;letter-spacing:0.10px;transform:scaleX(1.1300);transform-origin:0 0;">20180615T15:59:02:927</div><div style="left:400.9px;top:347.0px;font-size:11px;line-height:16px;color:#111;white-space:pre;transform:scaleX(1.0809);transform-origin:0 0;">TimeSegmentDuration [1x1]</div><div style="left:587.8px;top:347.0px;font-size:11px;line-height:16px;color:#111;white-space:pre;transform:scaleX(0.9306);transform-origin:0 0;">INTEGER</div><div style="left:837.4px;top:347.0px;font-size:11px;line-height:16px;color:#111;white-space:pre;transform:scaleX(1.1169);transform-origin:0 0;">300</div><div style="left:400.9px;top:362.0px;font-size:11px;line-height:16px;color:#111;white-space:pre;transform:scaleX(1.1080);transform-origin:0 0;">Active [1x1]</div><div style="left:587.8px;top:362.0px;font-size:11px;line-height:16px;color:#111;white-space:pre;transform:scaleX(0.9645);transform-origin:0 0;">BOOLEAN</div><div style="left:837.4px;top:362.0px;font-size:11px;line-height:16px;color:#111;white-space:pre;transform:scaleX(0.9317);transform-origin:0 0;">TRUE</div><div style="left:400.9px;top:377.0px;font-size:11px;line-height:16px;color:#f80f1c;white-space:pre;transform:scaleX(1.0827);transform-origin:0 0;">TimeSegmentStartTime [1x1]</div><div style="left:587.8px;top:377.0px;font-size:11px;line-height:16px;color:#f80f1c;white-space:pre;transform:scaleX(0.9248);transform-origin:0 0;">TIME</div><div style="left:837.4px;top:377.0px;font-size:11px;line-height:16px;color:#f80f1c;white-space:pre;letter-spacing:0.10px;transform:scaleX(1.1300);transform-origin:0 0;">20180615T16:04:02:927</div><div style="left:400.9px;top:392.0px;font-size:11px;line-height:16px;color:#111;white-space:pre;transform:scaleX(1.0809);transform-origin:0 0;">TimeSegmentDuration [1x1]</div><div style="left:587.8px;top:392.0px;font-size:11px;line-height:16px;color:#111;white-space:pre;transform:scaleX(0.9306);transform-origin:0 0;">INTEGER</div><div style="left:837.4px;top:392.0px;font-size:11px;line-height:16px;color:#111;white-space:pre;transform:scaleX(1.1169);transform-origin:0 0;">300</div><div style="left:400.9px;top:407.0px;font-size:11px;line-height:16px;color:#111;white-space:pre;transform:scaleX(1.1080);transform-origin:0 0;">Active [1x1]</div><div style="left:587.8px;top:407.0px;font-size:11px;line-height:16px;color:#111;white-space:pre;transform:scaleX(0.9645);transform-origin:0 0;">BOOLEAN</div><div style="left:837.4px;top:407.0px;font-size:11px;line-height:16px;color:#111;white-space:pre;transform:scaleX(0.9317);transform-origin:0 0;">TRUE</div><svg style="left:358.9px;top:426.3px;" width="8.8" height="7.2" viewBox="0 0 8.8 7.2"><path d="M0,0 L8.8,0 L4.4,7.2 Z" fill="#7f7f7f"/></svg><div style="left:368.9px;top:422.0px;font-size:11px;line-height:16px;color:#111;white-space:pre;transform:scaleX(1.0670);transform-origin:0 0;">ModuleExecutionModeDefinitions</div><svg style="left:374.9px;top:441.3px;" width="8.8" height="7.2" viewBox="0 0 8.8 7.2"><path d="M0,0 L8.8,0 L4.4,7.2 Z" fill="#7f7f7f"/></svg><div style="left:384.9px;top:437.0px;font-size:11px;line-height:16px;color:#111;white-space:pre;transform:scaleX(1.0596);transform-origin:0 0;">GeometryModule</div><svg style="left:390.9px;top:456.3px;" width="8.8" height="7.2" viewBox="0 0 8.8 7.2"><path d="M0,0 L8.8,0 L4.4,7.2 Z" fill="#7f7f7f"/></svg><div style="left:400.9px;top:452.0px;font-size:11px;line-height:16px;color:#111;white-space:pre;transform:scaleX(1.0571);transform-origin:0 0;">ModuleExecutionMode</div><svg style="left:406.9px;top:471.3px;" width="8.8" height="7.2" viewBox="0 0 8.8 7.2"><path d="M0,0 L8.8,0 L4.4,7.2 Z" fill="#7f7f7f"/></svg><div style="left:416.9px;top:467.0px;font-size:11px;line-height:16px;color:#111;white-space:pre;transform:scaleX(1.0384);transform-origin:0 0;">Nominal</div><div style="left:432.9px;top:482.0px;font-size:11px;line-height:16px;color:#111;white-space:pre;transform:scaleX(1.0923);transform-origin:0 0;">Nbands [1x1]</div><div style="left:587.8px;top:482.0px;font-size:11px;line-height:16px;color:#111;white-space:pre;transform:scaleX(0.9306);transform-origin:0 0;">INTEGER</div><div style="left:837.4px;top:482.0px;font-size:11px;line-height:16px;color:#111;white-space:pre;transform:scaleX(1.0788);transform-origin:0 0;">13</div><svg style="left:406.9px;top:501.3px;" width="8.8" height="7.2" viewBox="0 0 8.8 7.2"><path d="M0,0 L8.8,0 L4.4,7.2 Z" fill="#7f7f7f"/></svg><div style="left:416.9px;top:497.0px;font-size:11px;line-height:16px;color:#111;white-space:pre;transform:scaleX(1.0365);transform-origin:0 0;">Maneuver</div><div style="left:432.9px;top:512.0px;font-size:11px;line-height:16px;color:#111;white-space:pre;transform:scaleX(1.1042);transform-origin:0 0;">acceleration [1x1]</div><div style="left:587.8px;top:512.0px;font-size:11px;line-height:16px;color:#111;white-space:pre;transform:scaleX(0.9297);transform-origin:0 0;">FLOAT</div><div style="left:837.4px;top:512.0px;font-size:11px;line-height:16px;color:#111;white-space:pre;transform:scaleX(1.0976);transform-origin:0 0;">0.03</div><div style="left:432.9px;top:527.0px;font-size:11px;line-height:16px;color:#111;white-space:pre;transform:scaleX(1.1147);transform-origin:0 0;">duration [1x1]</div><div style="left:587.8px;top:527.0px;font-size:11px;line-height:16px;color:#111;white-space:pre;transform:scaleX(0.9306);transform-origin:0 0;">INTEGER</div><div style="left:837.4px;top:527.0px;font-size:11px;line-height:16px;color:#111;white-space:pre;transform:scaleX(1.1300);transform-origin:0 0;">1</div><svg style="left:374.9px;top:546.3px;" width="8.8" height="7.2" viewBox="0 0 8.8 7.2"><path d="M0,0 L8.8,0 L4.4,7.2 Z" fill="#7f7f7f"/></svg><div style="left:384.9px;top:542.0px;font-size:11px;line-height:16px;color:#111;white-space:pre;transform:scaleX(1.0456);transform-origin:0 0;">SceneGenerator</div><svg style="left:390.9px;top:561.3px;" width="8.8" height="7.2" viewBox="0 0 8.8 7.2"><path d="M0,0 L8.8,0 L4.4,7.2 Z" fill="#7f7f7f"/></svg><div style="left:400.9px;top:557.0px;font-size:11px;line-height:16px;color:#111;white-space:pre;transform:scaleX(1.0571);transform-origin:0 0;">ModuleExecutionMode</div><svg style="left:406.9px;top:576.3px;" width="8.8" height="7.2" viewBox="0 0 8.8 7.2"><path d="M0,0 L8.8,0 L4.4,7.2 Z" fill="#7f7f7f"/></svg><div style="left:416.9px;top:572.0px;font-size:11px;line-height:16px;color:#111;white-space:pre;transform:scaleX(1.0384);transform-origin:0 0;">Nominal</div><div style="left:432.9px;top:587.0px;font-size:11px;line-height:16px;color:#111;white-space:pre;transform:scaleX(1.0806);transform-origin:0 0;">time_toa_factor [1x1]</div><div style="left:587.8px;top:587.0px;font-size:11px;line-height:16px;color:#111;white-space:pre;transform:scaleX(0.9297);transform-origin:0 0;">FLOAT</div><div style="left:837.4px;top:587.0px;font-size:11px;line-height:16px;color:#111;white-space:pre;transform:scaleX(1.1300);transform-origin:0 0;">2</div><div style="left:432.9px;top:602.0px;font-size:11px;line-height:16px;color:#111;white-space:pre;transform:scaleX(1.0870);transform-origin:0 0;">time_pol_factor [1x1]</div><div style="left:587.8px;top:602.0px;font-size:11px;line-height:16px;color:#111;white-space:pre;transform:scaleX(0.9297);transform-origin:0 0;">FLOAT</div><div style="left:837.4px;top:602.0px;font-size:11px;line-height:16px;color:#111;white-space:pre;transform:scaleX(1.0529);transform-origin:0 0;">0.1</div><svg style="left:406.9px;top:621.3px;" width="8.8" height="7.2" viewBox="0 0 8.8 7.2"><path d="M0,0 L8.8,0 L4.4,7.2 Z" fill="#7f7f7f"/></svg><div style="left:416.9px;top:617.0px;font-size:11px;line-height:16px;color:#111;white-space:pre;transform:scaleX(1.0920);transform-origin:0 0;">Off</div><div style="left:432.9px;top:632.0px;font-size:11px;line-height:16px;color:#111;white-space:pre;transform:scaleX(1.1097);transform-origin:0 0;">calibration [1x1]</div><div style="left:587.8px;top:632.0px;font-size:11px;line-height:16px;color:#111;white-space:pre;transform:scaleX(0.9645);transform-origin:0 0;">BOOLEAN</div><div style="left:837.4px;top:632.0px;font-size:11px;line-height:16px;color:#111;white-space:pre;transform:scaleX(0.9317);transform-origin:0 0;">TRUE</div><div style="left:368.9px;top:647.0px;font-size:11px;line-height:16px;color:#111;white-space:pre;transform:scaleX(1.0893);transform-origin:0 0;">test_parameter [4x4]</div><div style="left:587.8px;top:647.0px;font-size:11px;line-height:16px;color:#111;white-space:pre;transform:scaleX(0.9306);transform-origin:0 0;">INTEGER</div><div style="left:837.4px;top:647.0px;font-size:11px;line-height:16px;color:#111;white-space:pre;letter-spacing:0.26px;transform:scaleX(1.1300);transform-origin:0 0;">[[0,4,7,1],[0,1,4,2],[-1,39,3,11],[9,99,34,-4]]</div><div style="left:335.0px;top:142.0px;width:918.5px;height:13.7px;background:#fff"></div><div style="left:584.0px;top:143.5px;width:1.0px;height:10.5px;background:#d9d9d9"></div><div style="left:834.0px;top:143.5px;width:1.0px;height:10.5px;background:#d9d9d9"></div><div style="left:337.4px;top:140.0px;font-size:11px;line-height:16px;color:#111;white-space:pre;">Name</div><div style="left:587.8px;top:140.0px;font-size:11px;line-height:16px;color:#111;white-space:pre;transform:scaleX(1.0064);transform-origin:0 0;">Type</div><div style="left:837.4px;top:140.0px;font-size:11px;line-height:16px;color:#111;white-space:pre;transform:scaleX(1.0269);transform-origin:0 0;">Values</div><div style="left:1239.5px;top:156.7px;width:14.0px;height:520.8px;background:#fafafa;border-left:1px solid #e9e9e9;box-sizing:border-box"></div><div style="left:1243.3px;top:163.2px;width:7.4px;height:496.8px;background:#c1c1c1;border-radius:4px"></div><div style="left:335.0px;top:663.0px;width:904.5px;height:14.5px;background:#fafafa;border-top:1px solid #e9e9e9;box-sizing:border-box"></div><div style="left:338.3px;top:667.4px;width:647.3px;height:7.0px;background:#c1c1c1;border-radius:3.5px"></div><div style="left:0.5px;top:697.3px;width:1268.1px;height:211.7px;border:1px solid #a6a6a6;border-radius:3px 3px 0 0;box-sizing:border-box"></div><div style="left:27.2px;top:697.8px;width:1.0px;height:22.9px;background:#a6a6a6"></div><div style="left:27.2px;top:719.7px;width:1240.4px;height:1.0px;background:#a6a6a6"></div><div style="left:4.2px;top:702.0px;font-size:11px;line-height:16px;color:#111;white-space:pre;transform:scaleX(1.0025);transform-origin:0 0;">Log</div><div style="left:1227.0px;top:703.0px;width:10.0px;height:4.0px;border:1px solid #000;box-sizing:border-box;background:#fff"></div><div style="left:1248.9px;top:703.0px;width:10.0px;height:10.0px;border:1px solid #000;box-sizing:border-box;background:#fff"></div><div style="left:1249.9px;top:705.0px;width:8.0px;height:1.0px;background:#000"></div><div style="left:1.5px;top:720.7px;width:2.0px;height:187.3px;background:#f3f3f3"></div><div style="left:1.5px;top:906.0px;width:1266.1px;height:2.0px;background:#f3f3f3"></div><div style="left:1265.6px;top:720.7px;width:2.0px;height:187.3px;background:#f3f3f3"></div><div style="left:1.5px;top:720.7px;width:1264.1px;height:187.6px;background:#eeeeee"></div><div style="left:11.4px;top:739.0px;width:1246.3px;height:157.0px;background:#e4e4e4;border:1px solid #dadada;border-radius:4px;box-sizing:border-box"></div><div style="left:523.8px;top:727.6px;width:127.7px;height:20.2px;background:#fbb9bc;border:1px solid #f0a3a8;border-radius:4px 0 0 4px;box-sizing:border-box"></div><div style="left:533.5px;top:730.0px;font-size:13px;line-height:16px;color:#111;white-space:pre;transform:scaleX(1.0213);transform-origin:0 0;">ParameterParsing</div><div style="left:651.5px;top:727.6px;width:93.1px;height:20.2px;background:linear-gradient(#7b84d6,#5570da 55%,#3c66dd);border:1px solid #3f6be3;border-radius:0 4px 4px 0;box-sizing:border-box"></div><div style="left:663.8px;top:730.0px;font-size:13px;line-height:16px;color:#f2f2ff;white-space:pre;letter-spacing:0.01px;transform:scaleX(1.1300);transform-origin:0 0;">Application</div><div style="left:14.0px;top:756.5px;width:1241.6px;height:137.0px;background:#fff;border:1px solid #a9a9a9;border-top-color:#8c8c8c;box-sizing:border-box"></div><div style="left:15.0px;top:757.5px;width:1239.6px;height:15.2px;background:#f6f6f6"></div><div style="left:215.3px;top:759.5px;width:1.0px;height:11.5px;background:#d4d4d4"></div><div style="left:295.2px;top:759.5px;width:1.0px;height:11.5px;background:#d4d4d4"></div><div style="left:18.4px;top:757.0px;font-size:11.5px;line-height:16px;color:#111;white-space:pre;transform:scaleX(0.9949);transform-origin:0 0;">Time</div><div style="left:219.2px;top:757.0px;font-size:11.5px;line-height:16px;color:#111;white-space:pre;transform:scaleX(1.0338);transform-origin:0 0;">Log Type</div><div style="left:299.4px;top:757.0px;font-size:11.5px;line-height:16px;color:#111;white-space:pre;transform:scaleX(0.9729);transform-origin:0 0;">Message</div><div style="left:215.8px;top:773.0px;width:79.2px;height:18.0px;background:#eff0e2"></div><div style="left:15.0px;top:791.0px;width:1223.9px;height:18.0px;background:#eeefe2"></div><div style="left:215.3px;top:773.0px;width:1.0px;height:36.0px;background:#f8f8f4"></div><div style="left:295.0px;top:773.0px;width:1.0px;height:36.0px;background:#f8f8f4"></div><div style="left:16.9px;top:775.0px;font-size:12px;line-height:16px;color:#111;white-space:pre;letter-spacing:0.44px;transform:scaleX(1.1300);transform-origin:0 0;">2018-06-21T12:04:19.852</div><svg style="left:217.7px;top:775.8px;" width="13" height="13" viewBox="0 0 13 13"><defs><radialGradient id="gin" cx="0.4" cy="0.3" r="0.8"><stop offset="0" stop-color="#4aa3e6"/><stop offset="1" stop-color="#0a3f96"/></radialGradient></defs><circle cx="6.5" cy="6.5" r="6.3" fill="url(#gin)"/><rect x="5.6" y="5.4" width="2" height="4.8" fill="#fff"/><circle cx="6.6" cy="3.4" r="1.15" fill="#fff"/></svg><div style="left:236.2px;top:775.0px;font-size:12px;line-height:16px;color:#2fa043;white-space:pre;transform:scaleX(1.0392);transform-origin:0 0;">Info</div><div style="left:297.1px;top:775.0px;font-size:12px;line-height:16px;color:#111;white-space:pre;transform:scaleX(1.1076);transform-origin:0 0;">Loaded parameters file:/Users/mzundo/timelinescenarioworkshop.xml</div><div style="left:16.9px;top:793.0px;font-size:12px;line-height:16px;color:#111;white-space:pre;letter-spacing:0.44px;transform:scaleX(1.1300);transform-origin:0 0;">2018-06-21T12:05:47.136</div><svg style="left:217.7px;top:793.9px;" width="13" height="13" viewBox="0 0 13 13"><defs><radialGradient id="gin" cx="0.4" cy="0.3" r="0.8"><stop offset="0" stop-color="#4aa3e6"/><stop offset="1" stop-color="#0a3f96"/></radialGradient></defs><circle cx="6.5" cy="6.5" r="6.3" fill="url(#gin)"/><rect x="5.6" y="5.4" width="2" height="4.8" fill="#fff"/><circle cx="6.6" cy="3.4" r="1.15" fill="#fff"/></svg><div style="left:236.2px;top:793.0px;font-size:12px;line-height:16px;color:#2fa043;white-space:pre;transform:scaleX(1.0392);transform-origin:0 0;">Info</div><div style="left:297.1px;top:793.0px;font-size:12px;line-height:16px;color:#111;white-space:pre;transform:scaleX(1.1261);transform-origin:0 0;">Loaded parameters file:/Users/mzundo/Desktop/param.xml</div><div style="left:1238.9px;top:757.5px;width:15.7px;height:135.0px;background:#fafafa;border-left:1px solid #e2e2e2;box-sizing:border-box"></div><div style="left:1240.0px;top:758.5px;width:14.0px;height:14.0px;background:#f4f4f4;border:1px solid #bdbdbd;box-sizing:border-box"></div><svg style="left:1241.0px;top:759.5px;" width="12" height="12" viewBox="0 0 12 12"><path d="M2,1.5 L9,1.5 M2,1.5 L2,9.5 M2,4.5 L9,4.5 M5.5,1.5 L5.5,7 M9,1.5 L9,5" stroke="#111" stroke-width="1.1" fill="none"/><path d="M4.6,7.3 L10.8,7.3 L7.7,10.8 Z" fill="#111"/></svg><div style="left:0.0px;top:908.3px;width:1269.0px;height:2.0px;background:#f5f5f5"></div><div style="left:0.0px;top:910.0px;width:1269.0px;height:40.0px;background:#e5e5e5"></div><div style="left:1.4px;top:922.4px;width:1.8px;height:2.0px;background:#a39a86"></div><div style="left:12.2px;top:916.4px;width:1.8px;height:3.0px;background:#a39a86"></div><div style="left:1.4px;top:926.9px;width:1.8px;height:2.0px;background:#a39a86"></div><div style="left:12.2px;top:924.5px;width:1.8px;height:3.0px;background:#a39a86"></div><div style="left:1.4px;top:931.4px;width:1.8px;height:2.0px;background:#a39a86"></div><div style="left:12.2px;top:932.6px;width:1.8px;height:3.0px;background:#a39a86"></div><div style="left:1.4px;top:935.9px;width:1.8px;height:2.0px;background:#a39a86"></div><div style="left:12.2px;top:940.7px;width:1.8px;height:3.0px;background:#a39a86"></div><svg style="left:21.0px;top:914.0px;" width="150" height="36" viewBox="0 0 150 36"><defs><linearGradient id="gbx" x1="0" y1="0" x2="0" y2="1"><stop offset="0" stop-color="#d6bd97"/><stop offset="0.45" stop-color="#b99a72"/><stop offset="1" stop-color="#a3835a"/></linearGradient></defs>
<rect x="0" y="0" width="27" height="27.7" fill="url(#gbx)"/><rect x="86" y="0" width="27" height="27.7" fill="url(#gbx)"/>
<text x="7.4" y="22.8" font-family="Liberation Sans" font-size="24.6" fill="#fbf7f0" textLength="11.6" lengthAdjust="spacingAndGlyphs">P</text>
<text x="94" y="22.8" font-family="Liberation Sans" font-size="24.6" fill="#fbf7f0" textLength="10.2" lengthAdjust="spacingAndGlyphs">E</text>
<text x="17.6" y="22.3" font-family="Liberation Sans" font-weight="700" font-size="18.5" fill="#6f7cc6" fill-opacity="0.93" textLength="75.4" lengthAdjust="spacingAndGlyphs">arameter</text>
<text x="104.7" y="22.3" font-family="Liberation Sans" font-weight="700" font-size="18.5" fill="#6f7cc6" fill-opacity="0.93" textLength="39.2" lengthAdjust="spacingAndGlyphs">ditor</text>
<circle cx="118.2" cy="30.6" r="2.1" fill="#b9c4d8"/><circle cx="118.8" cy="31" r="1.1" fill="#e08a5a"/><text x="120.4" y="33" font-family="Liberation Sans" font-size="7.4" fill="#5a5a5a" textLength="20.4" lengthAdjust="spacingAndGlyphs">penSF</text></svg></div><div class="win" style="left:1759px;top:578px;width:743px;height:764.3px;background:#fafafa;border-radius:5px;box-shadow:0 0 0 0.5px rgba(0,0,0,.4),0 18px 40px rgba(0,0,0,.5),0 4px 10px rgba(0,0,0,.25)"><div style="left:0.0px;top:0.0px;width:743.0px;height:22.0px;background:linear-gradient(#ebebeb,#d6d6d6);border-bottom:1px solid #b5b5b5;box-sizing:border-box"></div><div style="left:8.0px;top:5.3px;width:12.0px;height:12.0px;border-radius:50%;background:#fc5f57;border:0.5px solid #de4840;box-sizing:border-box"></div><div style="left:28.0px;top:5.3px;width:12.0px;height:12.0px;border-radius:50%;background:#fdbc2e;border:0.5px solid #dc9f20;box-sizing:border-box"></div><div style="left:48.0px;top:5.3px;width:12.0px;height:12.0px;border-radius:50%;background:#28c840;border:0.5px solid #1aa82c;box-sizing:border-box"></div><svg style="left:269.0px;top:3.5px;" width="14" height="17" viewBox="0 0 14 17"><path d="M1.5,0.8 L8.8,0.8 L12.5,4.6 L12.5,16 L1.5,16 Z" fill="#fff" stroke="#a9a9a9" stroke-width="0.9"/><path d="M8.8,0.8 L8.8,4.6 L12.5,4.6" fill="#eee" stroke="#a9a9a9" stroke-width="0.8"/><path d="M3.5,12.5 L5,7.5 L6.5,12 L8,8.5 L9.5,12.5" fill="none" stroke="#4a55c8" stroke-width="1"/></svg><div style="left:289.0px;top:4.0px;font-size:13.6px;line-height:16px;color:#333;white-space:pre;">timelinescenarioworkshop.xml</div><div style="left:680.0px;top:4.0px;font-size:11px;line-height:16px;color:#444;white-space:pre;transform:scaleX(1.0434);transform-origin:0 0;">Free Mode</div><div style="left:0.0px;top:22.0px;width:743.0px;height:17.0px;background:#e6e6e6;border-bottom:1px solid #c3c3c3;box-sizing:border-box"></div><svg style="left:6.5px;top:24.5px;" width="12" height="12" viewBox="0 0 12 12"><g transform="translate(6,6)"><circle r="3.6" fill="none" stroke="#858585" stroke-width="1.5"/><path d="M0,-5.4 L0,5.4 M-5.4,0 L5.4,0 M-3.8,-3.8 L3.8,3.8 M-3.8,3.8 L3.8,-3.8" stroke="#858585" stroke-width="1.3"/><circle r="1.4" fill="#e6e6e6"/></g></svg><div style="left:30.4px;top:22.0px;font-size:11px;line-height:16px;color:#4a4a4a;white-space:pre;transform:scaleX(1.0768);transform-origin:0 0;">~/timelinescenarioworkshop.xml</div><svg style="left:201.5px;top:31.5px;" width="6" height="4" viewBox="0 0 6 4"><path d="M0.3,0.3 L5.7,0.3 L3,3.6 Z" fill="#555"/></svg><div style="left:546.8px;top:22.0px;font-size:11px;line-height:16px;color:#4a4a4a;white-space:pre;transform:scaleX(1.0944);transform-origin:0 0;">(functions)</div><svg style="left:606.0px;top:31.5px;" width="6" height="4" viewBox="0 0 6 4"><path d="M0.3,0.3 L5.7,0.3 L3,3.6 Z" fill="#555"/></svg><svg style="left:624.0px;top:24.0px;" width="12" height="12" viewBox="0 0 12 12"><path d="M2,10 L4.5,9.4 L10.5,3.4 L8.6,1.5 L2.6,7.5 Z" fill="#666"/></svg><svg style="left:639.0px;top:32.0px;" width="6" height="4" viewBox="0 0 6 4"><path d="M0.3,0.3 L5.7,0.3 L3,3.6 Z" fill="#555"/></svg><svg style="left:654.0px;top:24.0px;" width="13" height="12" viewBox="0 0 13 12"><rect x="1" y="1" width="8" height="8" fill="#8a8a8a"/><rect x="3.5" y="3.5" width="8" height="8" fill="#666" stroke="#e6e6e6" stroke-width="0.7"/></svg><svg style="left:669.0px;top:32.0px;" width="6" height="4" viewBox="0 0 6 4"><path d="M0.3,0.3 L5.7,0.3 L3,3.6 Z" fill="#555"/></svg><div style="left:685.0px;top:22.0px;font-size:11px;line-height:16px;color:#555;white-space:pre;transform:scaleX(1.0800);transform-origin:0 0;">#</div><svg style="left:694.5px;top:32.0px;" width="6" height="4" viewBox="0 0 6 4"><path d="M0.3,0.3 L5.7,0.3 L3,3.6 Z" fill="#555"/></svg><svg style="left:709.0px;top:24.0px;" width="11" height="13" viewBox="0 0 11 13"><path d="M1.5,0.8 L6.5,0.8 L9.5,3.8 L9.5,12 L1.5,12 Z M6.5,0.8 L6.5,3.8 L9.5,3.8" fill="none" stroke="#7a7a7a" stroke-width="0.9"/></svg><div style="left:0.0px;top:39.0px;width:63.5px;height:710.0px;background:#ebebeb;border-right:1px solid #dedede;box-sizing:border-box"></div><div style="left:613.0px;top:39.0px;width:115.2px;height:697.0px;background:#f2f2f2"></div><div style="left:68.3px;top:44.0px;width:659.9px;height:14.0px;background:#fffbd0;border-top:1px solid #f2ecba;border-bottom:1px solid #f2ecba;box-sizing:border-box"></div><div style="left:11.0px;top:46.0px;width:30.5px;text-align:right;font-family:'Liberation Mono',monospace;font-size:10px;line-height:14px;color:#4a4a4a;white-space:pre">1</div><svg style="left:50.3px;top:49.1px;" width="7.4" height="4.6" viewBox="0 0 7.4 4.6"><path d="M0,0 L7.4,0 L3.7,4.6 Z" fill="#6b6b6b"/></svg><div style="left:11.0px;top:60.0px;width:30.5px;text-align:right;font-family:'Liberation Mono',monospace;font-size:10px;line-height:14px;color:#4a4a4a;white-space:pre">2</div><svg style="left:50.3px;top:63.1px;" width="7.4" height="4.6" viewBox="0 0 7.4 4.6"><path d="M0,0 L7.4,0 L3.7,4.6 Z" fill="#6b6b6b"/></svg><div style="left:11.0px;top:74.0px;width:30.5px;text-align:right;font-family:'Liberation Mono',monospace;font-size:10px;line-height:14px;color:#4a4a4a;white-space:pre">3</div><div style="left:11.0px;top:88.0px;width:30.5px;text-align:right;font-family:'Liberation Mono',monospace;font-size:10px;line-height:14px;color:#4a4a4a;white-space:pre">4</div><div style="left:11.0px;top:102.0px;width:30.5px;text-align:right;font-family:'Liberation Mono',monospace;font-size:10px;line-height:14px;color:#4a4a4a;white-space:pre">5</div><svg style="left:51.0px;top:104.3px;" width="7" height="6" viewBox="0 0 7 6"><path d="M0.5,0 L0.5,5 M0,4.2 L6.5,4.2" stroke="#6b6b6b" stroke-width="1" fill="none"/><rect x="1" y="2.6" width="5.5" height="2.2" fill="#6b6b6b"/></svg><div style="left:11.0px;top:116.0px;width:30.5px;text-align:right;font-family:'Liberation Mono',monospace;font-size:10px;line-height:14px;color:#4a4a4a;white-space:pre">6</div><svg style="left:50.3px;top:119.1px;" width="7.4" height="4.6" viewBox="0 0 7.4 4.6"><path d="M0,0 L7.4,0 L3.7,4.6 Z" fill="#6b6b6b"/></svg><div style="left:11.0px;top:130.0px;width:30.5px;text-align:right;font-family:'Liberation Mono',monospace;font-size:10px;line-height:14px;color:#4a4a4a;white-space:pre">7</div><svg style="left:50.3px;top:133.1px;" width="7.4" height="4.6" viewBox="0 0 7.4 4.6"><path d="M0,0 L7.4,0 L3.7,4.6 Z" fill="#6b6b6b"/></svg><div style="left:11.0px;top:144.0px;width:30.5px;text-align:right;font-family:'Liberation Mono',monospace;font-size:10px;line-height:14px;color:#4a4a4a;white-space:pre">8</div><div style="left:11.0px;top:158.0px;width:30.5px;text-align:right;font-family:'Liberation Mono',monospace;font-size:10px;line-height:14px;color:#4a4a4a;white-space:pre">9</div><div style="left:11.0px;top:172.0px;width:30.5px;text-align:right;font-family:'Liberation Mono',monospace;font-size:10px;line-height:14px;color:#4a4a4a;white-space:pre">10</div><div style="left:11.0px;top:186.0px;width:30.5px;text-align:right;font-family:'Liberation Mono',monospace;font-size:10px;line-height:14px;color:#4a4a4a;white-space:pre">11</div><div style="left:11.0px;top:200.0px;width:30.5px;text-align:right;font-family:'Liberation Mono',monospace;font-size:10px;line-height:14px;color:#4a4a4a;white-space:pre">12</div><svg style="left:51.0px;top:202.3px;" width="7" height="6" viewBox="0 0 7 6"><path d="M0.5,0 L0.5,5 M0,4.2 L6.5,4.2" stroke="#6b6b6b" stroke-width="1" fill="none"/><rect x="1" y="2.6" width="5.5" height="2.2" fill="#6b6b6b"/></svg><div style="left:11.0px;top:214.0px;width:30.5px;text-align:right;font-family:'Liberation Mono',monospace;font-size:10px;line-height:14px;color:#4a4a4a;white-space:pre">13</div><svg style="left:50.3px;top:217.1px;" width="7.4" height="4.6" viewBox="0 0 7.4 4.6"><path d="M0,0 L7.4,0 L3.7,4.6 Z" fill="#6b6b6b"/></svg><div style="left:11.0px;top:228.0px;width:30.5px;text-align:right;font-family:'Liberation Mono',monospace;font-size:10px;line-height:14px;color:#4a4a4a;white-space:pre">14</div><div style="left:11.0px;top:242.0px;width:30.5px;text-align:right;font-family:'Liberation Mono',monospace;font-size:10px;line-height:14px;color:#4a4a4a;white-space:pre">15</div><div style="left:11.0px;top:256.0px;width:30.5px;text-align:right;font-family:'Liberation Mono',monospace;font-size:10px;line-height:14px;color:#4a4a4a;white-space:pre">16</div><div style="left:11.0px;top:270.0px;width:30.5px;text-align:right;font-family:'Liberation Mono',monospace;font-size:10px;line-height:14px;color:#4a4a4a;white-space:pre">17</div><div style="left:11.0px;top:284.0px;width:30.5px;text-align:right;font-family:'Liberation Mono',monospace;font-size:10px;line-height:14px;color:#4a4a4a;white-space:pre">18</div><svg style="left:51.0px;top:286.3px;" width="7" height="6" viewBox="0 0 7 6"><path d="M0.5,0 L0.5,5 M0,4.2 L6.5,4.2" stroke="#6b6b6b" stroke-width="1" fill="none"/><rect x="1" y="2.6" width="5.5" height="2.2" fill="#6b6b6b"/></svg><div style="left:11.0px;top:298.0px;width:30.5px;text-align:right;font-family:'Liberation Mono',monospace;font-size:10px;line-height:14px;color:#4a4a4a;white-space:pre">19</div><svg style="left:50.3px;top:301.1px;" width="7.4" height="4.6" viewBox="0 0 7.4 4.6"><path d="M0,0 L7.4,0 L3.7,4.6 Z" fill="#6b6b6b"/></svg><div style="left:11.0px;top:312.0px;width:30.5px;text-align:right;font-family:'Liberation Mono',monospace;font-size:10px;line-height:14px;color:#4a4a4a;white-space:pre">20</div><div style="left:11.0px;top:326.0px;width:30.5px;text-align:right;font-family:'Liberation Mono',monospace;font-size:10px;line-height:14px;color:#4a4a4a;white-space:pre">21</div><div style="left:11.0px;top:340.0px;width:30.5px;text-align:right;font-family:'Liberation Mono',monospace;font-size:10px;line-height:14px;color:#4a4a4a;white-space:pre">22</div><div style="left:11.0px;top:354.0px;width:30.5px;text-align:right;font-family:'Liberation Mono',monospace;font-size:10px;line-height:14px;color:#4a4a4a;white-space:pre">23</div><div style="left:11.0px;top:368.0px;width:30.5px;text-align:right;font-family:'Liberation Mono',monospace;font-size:10px;line-height:14px;color:#4a4a4a;white-space:pre">24</div><svg style="left:51.0px;top:370.3px;" width="7" height="6" viewBox="0 0 7 6"><path d="M0.5,0 L0.5,5 M0,4.2 L6.5,4.2" stroke="#6b6b6b" stroke-width="1" fill="none"/><rect x="1" y="2.6" width="5.5" height="2.2" fill="#6b6b6b"/></svg><div style="left:11.0px;top:382.0px;width:30.5px;text-align:right;font-family:'Liberation Mono',monospace;font-size:10px;line-height:14px;color:#4a4a4a;white-space:pre">25</div><svg style="left:50.3px;top:385.1px;" width="7.4" height="4.6" viewBox="0 0 7.4 4.6"><path d="M0,0 L7.4,0 L3.7,4.6 Z" fill="#6b6b6b"/></svg><div style="left:11.0px;top:396.0px;width:30.5px;text-align:right;font-family:'Liberation Mono',monospace;font-size:10px;line-height:14px;color:#4a4a4a;white-space:pre">26</div><div style="left:11.0px;top:410.0px;width:30.5px;text-align:right;font-family:'Liberation Mono',monospace;font-size:10px;line-height:14px;color:#4a4a4a;white-space:pre">27</div><div style="left:11.0px;top:424.0px;width:30.5px;text-align:right;font-family:'Liberation Mono',monospace;font-size:10px;line-height:14px;color:#4a4a4a;white-space:pre">28</div><div style="left:11.0px;top:438.0px;width:30.5px;text-align:right;font-family:'Liberation Mono',monospace;font-size:10px;line-height:14px;color:#4a4a4a;white-space:pre">29</div><div style="left:11.0px;top:452.0px;width:30.5px;text-align:right;font-family:'Liberation Mono',monospace;font-size:10px;line-height:14px;color:#4a4a4a;white-space:pre">30</div><svg style="left:51.0px;top:454.3px;" width="7" height="6" viewBox="0 0 7 6"><path d="M0.5,0 L0.5,5 M0,4.2 L6.5,4.2" stroke="#6b6b6b" stroke-width="1" fill="none"/><rect x="1" y="2.6" width="5.5" height="2.2" fill="#6b6b6b"/></svg><div style="left:11.0px;top:466.0px;width:30.5px;text-align:right;font-family:'Liberation Mono',monospace;font-size:10px;line-height:14px;color:#4a4a4a;white-space:pre">31</div><svg style="left:51.0px;top:468.3px;" width="7" height="6" viewBox="0 0 7 6"><path d="M0.5,0 L0.5,5 M0,4.2 L6.5,4.2" stroke="#6b6b6b" stroke-width="1" fill="none"/><rect x="1" y="2.6" width="5.5" height="2.2" fill="#6b6b6b"/></svg><div style="left:11.0px;top:480.0px;width:30.5px;text-align:right;font-family:'Liberation Mono',monospace;font-size:10px;line-height:14px;color:#4a4a4a;white-space:pre">32</div><svg style="left:50.3px;top:483.1px;" width="7.4" height="4.6" viewBox="0 0 7.4 4.6"><path d="M0,0 L7.4,0 L3.7,4.6 Z" fill="#6b6b6b"/></svg><div style="left:11.0px;top:494.0px;width:30.5px;text-align:right;font-family:'Liberation Mono',monospace;font-size:10px;line-height:14px;color:#4a4a4a;white-space:pre">33</div><svg style="left:50.3px;top:497.1px;" width="7.4" height="4.6" viewBox="0 0 7.4 4.6"><path d="M0,0 L7.4,0 L3.7,4.6 Z" fill="#6b6b6b"/></svg><div style="left:11.0px;top:508.0px;width:30.5px;text-align:right;font-family:'Liberation Mono',monospace;font-size:10px;line-height:14px;color:#4a4a4a;white-space:pre">34</div><svg style="left:50.3px;top:511.1px;" width="7.4" height="4.6" viewBox="0 0 7.4 4.6"><path d="M0,0 L7.4,0 L3.7,4.6 Z" fill="#6b6b6b"/></svg><div style="left:11.0px;top:522.0px;width:30.5px;text-align:right;font-family:'Liberation Mono',monospace;font-size:10px;line-height:14px;color:#4a4a4a;white-space:pre">35</div><svg style="left:50.3px;top:525.1px;" width="7.4" height="4.6" viewBox="0 0 7.4 4.6"><path d="M0,0 L7.4,0 L3.7,4.6 Z" fill="#6b6b6b"/></svg><div style="left:11.0px;top:536.0px;width:30.5px;text-align:right;font-family:'Liberation Mono',monospace;font-size:10px;line-height:14px;color:#4a4a4a;white-space:pre">36</div><div style="left:11.0px;top:550.0px;width:30.5px;text-align:right;font-family:'Liberation Mono',monospace;font-size:10px;line-height:14px;color:#4a4a4a;white-space:pre">37</div><svg style="left:51.0px;top:552.3px;" width="7" height="6" viewBox="0 0 7 6"><path d="M0.5,0 L0.5,5 M0,4.2 L6.5,4.2" stroke="#6b6b6b" stroke-width="1" fill="none"/><rect x="1" y="2.6" width="5.5" height="2.2" fill="#6b6b6b"/></svg><div style="left:11.0px;top:564.0px;width:30.5px;text-align:right;font-family:'Liberation Mono',monospace;font-size:10px;line-height:14px;color:#4a4a4a;white-space:pre">38</div><svg style="left:51.0px;top:566.3px;" width="7" height="6" viewBox="0 0 7 6"><path d="M0.5,0 L0.5,5 M0,4.2 L6.5,4.2" stroke="#6b6b6b" stroke-width="1" fill="none"/><rect x="1" y="2.6" width="5.5" height="2.2" fill="#6b6b6b"/></svg><div style="left:11.0px;top:578.0px;width:30.5px;text-align:right;font-family:'Liberation Mono',monospace;font-size:10px;line-height:14px;color:#4a4a4a;white-space:pre">39</div><svg style="left:50.3px;top:581.1px;" width="7.4" height="4.6" viewBox="0 0 7.4 4.6"><path d="M0,0 L7.4,0 L3.7,4.6 Z" fill="#6b6b6b"/></svg><div style="left:11.0px;top:592.0px;width:30.5px;text-align:right;font-family:'Liberation Mono',monospace;font-size:10px;line-height:14px;color:#4a4a4a;white-space:pre">40</div><svg style="left:50.3px;top:595.1px;" width="7.4" height="4.6" viewBox="0 0 7.4 4.6"><path d="M0,0 L7.4,0 L3.7,4.6 Z" fill="#6b6b6b"/></svg><div style="left:11.0px;top:606.0px;width:30.5px;text-align:right;font-family:'Liberation Mono',monospace;font-size:10px;line-height:14px;color:#4a4a4a;white-space:pre">41</div><div style="left:11.0px;top:620.0px;width:30.5px;text-align:right;font-family:'Liberation Mono',monospace;font-size:10px;line-height:14px;color:#4a4a4a;white-space:pre">42</div><div style="left:11.0px;top:634.0px;width:30.5px;text-align:right;font-family:'Liberation Mono',monospace;font-size:10px;line-height:14px;color:#4a4a4a;white-space:pre">43</div><svg style="left:51.0px;top:636.3px;" width="7" height="6" viewBox="0 0 7 6"><path d="M0.5,0 L0.5,5 M0,4.2 L6.5,4.2" stroke="#6b6b6b" stroke-width="1" fill="none"/><rect x="1" y="2.6" width="5.5" height="2.2" fill="#6b6b6b"/></svg><div style="left:11.0px;top:648.0px;width:30.5px;text-align:right;font-family:'Liberation Mono',monospace;font-size:10px;line-height:14px;color:#4a4a4a;white-space:pre">44</div><svg style="left:51.0px;top:650.3px;" width="7" height="6" viewBox="0 0 7 6"><path d="M0.5,0 L0.5,5 M0,4.2 L6.5,4.2" stroke="#6b6b6b" stroke-width="1" fill="none"/><rect x="1" y="2.6" width="5.5" height="2.2" fill="#6b6b6b"/></svg><div style="left:11.0px;top:662.0px;width:30.5px;text-align:right;font-family:'Liberation Mono',monospace;font-size:10px;line-height:14px;color:#4a4a4a;white-space:pre">45</div><svg style="left:51.0px;top:664.3px;" width="7" height="6" viewBox="0 0 7 6"><path d="M0.5,0 L0.5,5 M0,4.2 L6.5,4.2" stroke="#6b6b6b" stroke-width="1" fill="none"/><rect x="1" y="2.6" width="5.5" height="2.2" fill="#6b6b6b"/></svg><div style="left:11.0px;top:676.0px;width:30.5px;text-align:right;font-family:'Liberation Mono',monospace;font-size:10px;line-height:14px;color:#4a4a4a;white-space:pre">46</div><svg style="left:50.3px;top:679.1px;" width="7.4" height="4.6" viewBox="0 0 7.4 4.6"><path d="M0,0 L7.4,0 L3.7,4.6 Z" fill="#6b6b6b"/></svg><div style="left:11.0px;top:690.0px;width:30.5px;text-align:right;font-family:'Liberation Mono',monospace;font-size:10px;line-height:14px;color:#4a4a4a;white-space:pre">47</div><svg style="left:50.3px;top:693.1px;" width="7.4" height="4.6" viewBox="0 0 7.4 4.6"><path d="M0,0 L7.4,0 L3.7,4.6 Z" fill="#6b6b6b"/></svg><div style="left:11.0px;top:704.0px;width:30.5px;text-align:right;font-family:'Liberation Mono',monospace;font-size:10px;line-height:14px;color:#4a4a4a;white-space:pre">48</div><svg style="left:50.3px;top:707.1px;" width="7.4" height="4.6" viewBox="0 0 7.4 4.6"><path d="M0,0 L7.4,0 L3.7,4.6 Z" fill="#6b6b6b"/></svg><div style="left:11.0px;top:718.0px;width:30.5px;text-align:right;font-family:'Liberation Mono',monospace;font-size:10px;line-height:14px;color:#4a4a4a;white-space:pre">49</div><div style="left:728.2px;top:39.0px;width:14.8px;height:697.0px;background:#f7f7f7;border-left:1px solid #e3e3e3;box-sizing:border-box"></div><div style="left:728.7px;top:39.3px;width:14.0px;height:4.7px;background:#7c7c7c"></div><div style="left:731.7px;top:47.0px;width:7.6px;height:560.0px;background:#bdbdbd;border-radius:4px"></div><div style="left:63.5px;top:736.0px;width:679.5px;height:13.0px;background:#f7f7f7;border-top:1px solid #e6e6e6;box-sizing:border-box"></div><div style="left:67.0px;top:739.0px;width:521.8px;height:7.7px;background:#bdbdbd;border-radius:4px"></div><div style="left:0.0px;top:749.0px;width:743.0px;height:16.0px;background:#e6e6e6;border-top:1px solid #c6c6c6;box-sizing:border-box"></div><div style="left:34.2px;top:750.0px;font-size:11px;line-height:16px;color:#555;white-space:pre;transform:scaleX(0.9500);transform-origin:0 0;">L: 1 C: 1</div><div style="left:118.0px;top:750.0px;font-size:11px;line-height:16px;color:#555;white-space:pre;transform:scaleX(0.9947);transform-origin:0 0;">XML</div><svg style="left:143.5px;top:759.0px;" width="6" height="4" viewBox="0 0 6 4"><path d="M0.3,0.3 L5.7,0.3 L3,3.6 Z" fill="#555"/></svg><div style="left:161.2px;top:750.0px;font-size:11px;line-height:16px;color:#555;white-space:pre;transform:scaleX(1.0768);transform-origin:0 0;">Unicode (UTF-8)</div><svg style="left:252.5px;top:759.0px;" width="6" height="4" viewBox="0 0 6 4"><path d="M0.3,0.3 L5.7,0.3 L3,3.6 Z" fill="#555"/></svg><div style="left:272.1px;top:750.0px;font-size:11px;line-height:16px;color:#555;white-space:pre;transform:scaleX(1.0569);transform-origin:0 0;">Unix (LF)</div><svg style="left:322.8px;top:759.0px;" width="6" height="4" viewBox="0 0 6 4"><path d="M0.3,0.3 L5.7,0.3 L3,3.6 Z" fill="#555"/></svg><svg style="left:341.0px;top:751.5px;" width="12" height="12" viewBox="0 0 12 12"><rect x="1.5" y="5.5" width="7" height="5.5" fill="#777"/><path d="M6.2,5.5 L6.2,3.4 A2.1,2.1 0 0 1 10.4,3.4 L10.4,4.6" fill="none" stroke="#777" stroke-width="1.1"/></svg><div style="left:373.3px;top:750.0px;font-size:11px;line-height:16px;color:#555;white-space:pre;transform:scaleX(1.0432);transform-origin:0 0;">Saved: 15-06-18, 15:51:31</div><svg style="left:529.5px;top:751.5px;" width="10" height="13" viewBox="0 0 10 13"><path d="M1,0.8 L5.8,0.8 L8.8,3.8 L8.8,11.8 L1,11.8 Z M5.8,0.8 L5.8,3.8 L8.8,3.8" fill="none" stroke="#777" stroke-width="0.9"/></svg><div style="left:548.7px;top:750.0px;font-size:11px;line-height:16px;color:#555;white-space:pre;transform:scaleX(1.0529);transform-origin:0 0;">3,497 / 287 / 61</div><div style="left:645.0px;top:750.0px;font-size:11px;line-height:16px;color:#555;white-space:pre;transform:scaleX(0.9313);transform-origin:0 0;">100%</div><svg style="left:676.0px;top:759.0px;" width="6" height="4" viewBox="0 0 6 4"><path d="M0.3,0.3 L5.7,0.3 L3,3.6 Z" fill="#555"/></svg></div><div class="win" style="left:1822.5px;top:617px;width:664.7px;height:697px;"><div style="left:9.5px;top:7.0px;font-family:'Liberation Mono',monospace;font-size:10px;line-height:14px;color:#000;white-space:pre"><span style="color:#15807f">&lt;?xml version="1.0" encoding="UTF-8"?&gt;</span><span style="color:#2d3adb">&lt;Timeline</span> <span style="color:#b5540f">version=</span><span style="color:#cf2d84">"00.00.01"</span><span style="color:#2d3adb">&gt;</span></div><div style="left:9.5px;top:21.0px;font-family:'Liberation Mono',monospace;font-size:10px;line-height:14px;color:#000;white-space:pre">    <span style="color:#2d3adb">&lt;TimeConfiguration</span><span style="color:#2d3adb">&gt;</span></div><div style="left:9.5px;top:35.0px;font-family:'Liberation Mono',monospace;font-size:10px;line-height:14px;color:#000;white-space:pre">        <span style="color:#2d3adb">&lt;parameter</span> <span style="color:#b5540f">description=</span><span style="color:#cf2d84">"Time Driven Execution Start Time"</span> <span style="color:#b5540f">name=</span><span style="color:#cf2d84">"InitialEpoch"</span> <span style="color:#b5540f">type=</span><span style="color:#cf2d84">"TIME"</span><span style="color:#2d3adb">&gt;</span>20180615T15:49:02:927<span style="color:#2d3adb">&lt;/parameter</span><span style="color:#2d3adb">&gt;</span></div><div style="left:9.5px;top:49.0px;font-family:'Liberation Mono',monospace;font-size:10px;line-height:14px;color:#000;white-space:pre">        <span style="color:#2d3adb">&lt;parameter</span> <span style="color:#b5540f">description=</span><span style="color:#cf2d84">"Time Segment Execution Length (seconds)"</span> <span style="color:#b5540f">name=</span><span style="color:#cf2d84">"DefaultTimeSegmentDuration"</span> <span style="color:#b5540f">type=</span><span style="color:#cf2d84">"INTEGER"</span> <span style="color:#b5540f">units=</span><span style="color:#cf2d84">"s"</span><span style="color:#2d3adb">&gt;</span>300<span style="color:#2d3adb">&lt;/parameter</span><span style="color:#2d3adb">&gt;</span></div><div style="left:9.5px;top:63.0px;font-family:'Liberation Mono',monospace;font-size:10px;line-height:14px;color:#000;white-space:pre">    <span style="color:#2d3adb">&lt;/TimeConfiguration</span><span style="color:#2d3adb">&gt;</span></div><div style="left:9.5px;top:77.0px;font-family:'Liberation Mono',monospace;font-size:10px;line-height:14px;color:#000;white-space:pre">    <span style="color:#2d3adb">&lt;TimeSegments</span><span style="color:#2d3adb">&gt;</span></div><div style="left:9.5px;top:91.0px;font-family:'Liberation Mono',monospace;font-size:10px;line-height:14px;color:#000;white-space:pre">        <span style="color:#2d3adb">&lt;TimeSegment</span><span style="color:#2d3adb">&gt;</span></div><div style="left:9.5px;top:105.0px;font-family:'Liberation Mono',monospace;font-size:10px;line-height:14px;color:#000;white-space:pre">            <span style="color:#2d3adb">&lt;parameter</span> <span style="color:#b5540f">description=</span><span style="color:#cf2d84">"Time Segment Start Time"</span> <span style="color:#b5540f">name=</span><span style="color:#cf2d84">"TimeSegmentStartTime"</span> <span style="color:#b5540f">type=</span><span style="color:#cf2d84">"TIME"</span><span style="color:#2d3adb">&gt;</span>20180615T15:49:02:927<span style="color:#2d3adb">&lt;/parameter</span><span style="color:#2d3adb">&gt;</span></div><div style="left:9.5px;top:119.0px;font-family:'Liberation Mono',monospace;font-size:10px;line-height:14px;color:#000;white-space:pre">            <span style="color:#2d3adb">&lt;parameter</span> <span style="color:#b5540f">description=</span><span style="color:#cf2d84">"Time Segment Duration"</span> <span style="color:#b5540f">name=</span><span style="color:#cf2d84">"TimeSegmentDuration"</span> <span style="color:#b5540f">type=</span><span style="color:#cf2d84">"INTEGER"</span> <span style="color:#b5540f">units=</span><span style="color:#cf2d84">"s"</span><span style="color:#2d3adb">&gt;</span>300<span style="color:#2d3adb">&lt;/parameter</span><span style="color:#2d3adb">&gt;</span></div><div style="left:9.5px;top:133.0px;font-family:'Liberation Mono',monospace;font-size:10px;line-height:14px;color:#000;white-space:pre">            <span style="color:#2d3adb">&lt;parameter</span> <span style="color:#b5540f">description=</span><span style="color:#cf2d84">"Time Segment Active"</span> <span style="color:#b5540f">name=</span><span style="color:#cf2d84">"Active"</span> <span style="color:#b5540f">type=</span><span style="color:#cf2d84">"BOOLEAN"</span><span style="color:#2d3adb">&gt;</span>TRUE<span style="color:#2d3adb">&lt;/parameter</span><span style="color:#2d3adb">&gt;</span></div><div style="left:9.5px;top:147.0px;font-family:'Liberation Mono',monospace;font-size:10px;line-height:14px;color:#000;white-space:pre">            <span style="color:#2d3adb">&lt;ModuleExecutionModes</span><span style="color:#2d3adb">/&gt;</span></div><div style="left:9.5px;top:161.0px;font-family:'Liberation Mono',monospace;font-size:10px;line-height:14px;color:#000;white-space:pre">        <span style="color:#2d3adb">&lt;/TimeSegment</span><span style="color:#2d3adb">&gt;</span></div><div style="left:9.5px;top:175.0px;font-family:'Liberation Mono',monospace;font-size:10px;line-height:14px;color:#000;white-space:pre">        <span style="color:#2d3adb">&lt;TimeSegment</span><span style="color:#2d3adb">&gt;</span></div><div style="left:9.5px;top:189.0px;font-family:'Liberation Mono',monospace;font-size:10px;line-height:14px;color:#000;white-space:pre">            <span style="color:#2d3adb">&lt;parameter</span> <span style="color:#b5540f">description=</span><span style="color:#cf2d84">"Time Segment Start Time"</span> <span style="color:#b5540f">name=</span><span style="color:#cf2d84">"TimeSegmentStartTime"</span> <span style="color:#b5540f">type=</span><span style="color:#cf2d84">"TIME"</span><span style="color:#2d3adb">&gt;</span>20180615T15:54:02:927<span style="color:#2d3adb">&lt;/parameter</span><span style="color:#2d3adb">&gt;</span></div><div style="left:9.5px;top:203.0px;font-family:'Liberation Mono',monospace;font-size:10px;line-height:14px;color:#000;white-space:pre">            <span style="color:#2d3adb">&lt;parameter</span> <span style="color:#b5540f">description=</span><span style="color:#cf2d84">"Time Segment Duration"</span> <span style="color:#b5540f">name=</span><span style="color:#cf2d84">"TimeSegmentDuration"</span> <span style="color:#b5540f">type=</span><span style="color:#cf2d84">"INTEGER"</span> <span style="color:#b5540f">units=</span><span style="color:#cf2d84">"s"</span><span style="color:#2d3adb">&gt;</span>300<span style="color:#2d3adb">&lt;/parameter</span><span style="color:#2d3adb">&gt;</span></div><div style="left:9.5px;top:217.0px;font-family:'Liberation Mono',monospace;font-size:10px;line-height:14px;color:#000;white-space:pre">            <span style="color:#2d3adb">&lt;parameter</span> <span style="color:#b5540f">description=</span><span style="color:#cf2d84">"Time Segment Active"</span> <span style="color:#b5540f">name=</span><span style="color:#cf2d84">"Active"</span> <span style="color:#b5540f">type=</span><span style="color:#cf2d84">"BOOLEAN"</span><span style="color:#2d3adb">&gt;</span>TRUE<span style="color:#2d3adb">&lt;/parameter</span><span style="color:#2d3adb">&gt;</span></div><div style="left:9.5px;top:231.0px;font-family:'Liberation Mono',monospace;font-size:10px;line-height:14px;color:#000;white-space:pre">            <span style="color:#2d3adb">&lt;ModuleExecutionModes</span><span style="color:#2d3adb">/&gt;</span></div><div style="left:9.5px;top:245.0px;font-family:'Liberation Mono',monospace;font-size:10px;line-height:14px;color:#000;white-space:pre">        <span style="color:#2d3adb">&lt;/TimeSegment</span><span style="color:#2d3adb">&gt;</span></div><div style="left:9.5px;top:259.0px;font-family:'Liberation Mono',monospace;font-size:10px;line-height:14px;color:#000;white-space:pre">        <span style="color:#2d3adb">&lt;TimeSegment</span><span style="color:#2d3adb">&gt;</span></div><div style="left:9.5px;top:273.0px;font-family:'Liberation Mono',monospace;font-size:10px;line-height:14px;color:#000;white-space:pre">            <span style="color:#2d3adb">&lt;parameter</span> <span style="color:#b5540f">description=</span><span style="color:#cf2d84">"Time Segment Start Time"</span> <span style="color:#b5540f">name=</span><span style="color:#cf2d84">"TimeSegmentStartTime"</span> <span style="color:#b5540f">type=</span><span style="color:#cf2d84">"TIME"</span><span style="color:#2d3adb">&gt;</span>20180615T15:59:02:927<span style="color:#2d3adb">&lt;/parameter</span><span style="color:#2d3adb">&gt;</span></div><div style="left:9.5px;top:287.0px;font-family:'Liberation Mono',monospace;font-size:10px;line-height:14px;color:#000;white-space:pre">            <span style="color:#2d3adb">&lt;parameter</span> <span style="color:#b5540f">description=</span><span style="color:#cf2d84">"Time Segment Duration"</span> <span style="color:#b5540f">name=</span><span style="color:#cf2d84">"TimeSegmentDuration"</span> <span style="color:#b5540f">type=</span><span style="color:#cf2d84">"INTEGER"</span> <span style="color:#b5540f">units=</span><span style="color:#cf2d84">"s"</span><span style="color:#2d3adb">&gt;</span>300<span style="color:#2d3adb">&lt;/parameter</span><span style="color:#2d3adb">&gt;</span></div><div style="left:9.5px;top:301.0px;font-family:'Liberation Mono',monospace;font-size:10px;line-height:14px;color:#000;white-space:pre">            <span style="color:#2d3adb">&lt;parameter</span> <span style="color:#b5540f">description=</span><span style="color:#cf2d84">"Time Segment Active"</span> <span style="color:#b5540f">name=</span><span style="color:#cf2d84">"Active"</span> <span style="color:#b5540f">type=</span><span style="color:#cf2d84">"BOOLEAN"</span><span style="color:#2d3adb">&gt;</span>TRUE<span style="color:#2d3adb">&lt;/parameter</span><span style="color:#2d3adb">&gt;</span></div><div style="left:9.5px;top:315.0px;font-family:'Liberation Mono',monospace;font-size:10px;line-height:14px;color:#000;white-space:pre">            <span style="color:#2d3adb">&lt;ModuleExecutionModes</span><span style="color:#2d3adb">/&gt;</span></div><div style="left:9.5px;top:329.0px;font-family:'Liberation Mono',monospace;font-size:10px;line-height:14px;color:#000;white-space:pre">        <span style="color:#2d3adb">&lt;/TimeSegment</span><span style="color:#2d3adb">&gt;</span></div><div style="left:9.5px;top:343.0px;font-family:'Liberation Mono',monospace;font-size:10px;line-height:14px;color:#000;white-space:pre">        <span style="color:#2d3adb">&lt;TimeSegment</span><span style="color:#2d3adb">&gt;</span></div><div style="left:9.5px;top:357.0px;font-family:'Liberation Mono',monospace;font-size:10px;line-height:14px;color:#000;white-space:pre">            <span style="color:#2d3adb">&lt;parameter</span> <span style="color:#b5540f">description=</span><span style="color:#cf2d84">"Time Segment Start Time"</span> <span style="color:#b5540f">name=</span><span style="color:#cf2d84">"TimeSegmentStartTime"</span> <span style="color:#b5540f">type=</span><span style="color:#cf2d84">"TIME"</span><span style="color:#2d3adb">&gt;</span>20180615T16:04:02:927<span style="color:#2d3adb">&lt;/parameter</span><span style="color:#2d3adb">&gt;</span></div><div style="left:9.5px;top:371.0px;font-family:'Liberation Mono',monospace;font-size:10px;line-height:14px;color:#000;white-space:pre">            <span style="color:#2d3adb">&lt;parameter</span> <span style="color:#b5540f">description=</span><span style="color:#cf2d84">"Time Segment Duration"</span> <span style="color:#b5540f">name=</span><span style="color:#cf2d84">"TimeSegmentDuration"</span> <span style="color:#b5540f">type=</span><span style="color:#cf2d84">"INTEGER"</span> <span style="color:#b5540f">units=</span><span style="color:#cf2d84">"s"</span><span style="color:#2d3adb">&gt;</span>300<span style="color:#2d3adb">&lt;/parameter</span><span style="color:#2d3adb">&gt;</span></div><div style="left:9.5px;top:385.0px;font-family:'Liberation Mono',monospace;font-size:10px;line-height:14px;color:#000;white-space:pre">            <span style="color:#2d3adb">&lt;parameter</span> <span style="color:#b5540f">description=</span><span style="color:#cf2d84">"Time Segment Active"</span> <span style="color:#b5540f">name=</span><span style="color:#cf2d84">"Active"</span> <span style="color:#b5540f">type=</span><span style="color:#cf2d84">"BOOLEAN"</span><span style="color:#2d3adb">&gt;</span>TRUE<span style="color:#2d3adb">&lt;/parameter</span><span style="color:#2d3adb">&gt;</span></div><div style="left:9.5px;top:399.0px;font-family:'Liberation Mono',monospace;font-size:10px;line-height:14px;color:#000;white-space:pre">            <span style="color:#2d3adb">&lt;ModuleExecutionModes</span><span style="color:#2d3adb">/&gt;</span></div><div style="left:9.5px;top:413.0px;font-family:'Liberation Mono',monospace;font-size:10px;line-height:14px;color:#000;white-space:pre">        <span style="color:#2d3adb">&lt;/TimeSegment</span><span style="color:#2d3adb">&gt;</span></div><div style="left:9.5px;top:427.0px;font-family:'Liberation Mono',monospace;font-size:10px;line-height:14px;color:#000;white-space:pre">    <span style="color:#2d3adb">&lt;/TimeSegments</span><span style="color:#2d3adb">&gt;</span></div><div style="left:9.5px;top:441.0px;font-family:'Liberation Mono',monospace;font-size:10px;line-height:14px;color:#000;white-space:pre">    <span style="color:#2d3adb">&lt;ModuleExecutionModeDefinitions</span><span style="color:#2d3adb">&gt;</span></div><div style="left:9.5px;top:455.0px;font-family:'Liberation Mono',monospace;font-size:10px;line-height:14px;color:#000;white-space:pre">        <span style="color:#2d3adb">&lt;GeometryModule</span><span style="color:#2d3adb">&gt;</span></div><div style="left:9.5px;top:469.0px;font-family:'Liberation Mono',monospace;font-size:10px;line-height:14px;color:#000;white-space:pre">            <span style="color:#2d3adb">&lt;ModuleExecutionMode</span><span style="color:#2d3adb">&gt;</span></div><div style="left:9.5px;top:483.0px;font-family:'Liberation Mono',monospace;font-size:10px;line-height:14px;color:#000;white-space:pre">                <span style="color:#2d3adb">&lt;Nominal</span><span style="color:#2d3adb">&gt;</span></div><div style="left:9.5px;top:497.0px;font-family:'Liberation Mono',monospace;font-size:10px;line-height:14px;color:#000;white-space:pre">                    <span style="color:#2d3adb">&lt;parameter</span> <span style="color:#b5540f">description=</span><span style="color:#cf2d84">"text"</span> <span style="color:#b5540f">name=</span><span style="color:#cf2d84">"Nbands"</span> <span style="color:#b5540f">type=</span><span style="color:#cf2d84">"INTEGER"</span><span style="color:#2d3adb">&gt;</span>13<span style="color:#2d3adb">&lt;/parameter</span><span style="color:#2d3adb">&gt;</span></div><div style="left:9.5px;top:511.0px;font-family:'Liberation Mono',monospace;font-size:10px;line-height:14px;color:#000;white-space:pre">                <span style="color:#2d3adb">&lt;/Nominal</span><span style="color:#2d3adb">&gt;</span></div><div style="left:9.5px;top:525.0px;font-family:'Liberation Mono',monospace;font-size:10px;line-height:14px;color:#000;white-space:pre">            <span style="color:#2d3adb">&lt;/ModuleExecutionMode</span><span style="color:#2d3adb">&gt;</span></div><div style="left:9.5px;top:539.0px;font-family:'Liberation Mono',monospace;font-size:10px;line-height:14px;color:#000;white-space:pre">            <span style="color:#2d3adb">&lt;ModuleExecutionMode</span><span style="color:#2d3adb">&gt;</span></div><div style="left:9.5px;top:553.0px;font-family:'Liberation Mono',monospace;font-size:10px;line-height:14px;color:#000;white-space:pre">                <span style="color:#2d3adb">&lt;Maneuver</span><span style="color:#2d3adb">&gt;</span></div><div style="left:9.5px;top:567.0px;font-family:'Liberation Mono',monospace;font-size:10px;line-height:14px;color:#000;white-space:pre">                    <span style="color:#2d3adb">&lt;parameter</span> <span style="color:#b5540f">description=</span><span style="color:#cf2d84">"text"</span> <span style="color:#b5540f">name=</span><span style="color:#cf2d84">"acceleration"</span> <span style="color:#b5540f">type=</span><span style="color:#cf2d84">"FLOAT"</span><span style="color:#2d3adb">&gt;</span>0.03<span style="color:#2d3adb">&lt;/parameter</span><span style="color:#2d3adb">&gt;</span></div><div style="left:9.5px;top:581.0px;font-family:'Liberation Mono',monospace;font-size:10px;line-height:14px;color:#000;white-space:pre">                    <span style="color:#2d3adb">&lt;parameter</span> <span style="color:#b5540f">description=</span><span style="color:#cf2d84">"Duration"</span> <span style="color:#b5540f">name=</span><span style="color:#cf2d84">"duration"</span> <span style="color:#b5540f">type=</span><span style="color:#cf2d84">"INTEGER"</span><span style="color:#2d3adb">&gt;</span>1<span style="color:#2d3adb">&lt;/parameter</span><span style="color:#2d3adb">&gt;</span></div><div style="left:9.5px;top:595.0px;font-family:'Liberation Mono',monospace;font-size:10px;line-height:14px;color:#000;white-space:pre">                <span style="color:#2d3adb">&lt;/Maneuver</span><span style="color:#2d3adb">&gt;</span></div><div style="left:9.5px;top:609.0px;font-family:'Liberation Mono',monospace;font-size:10px;line-height:14px;color:#000;white-space:pre">            <span style="color:#2d3adb">&lt;/ModuleExecutionMode</span><span style="color:#2d3adb">&gt;</span></div><div style="left:9.5px;top:623.0px;font-family:'Liberation Mono',monospace;font-size:10px;line-height:14px;color:#000;white-space:pre">        <span style="color:#2d3adb">&lt;/GeometryModule</span><span style="color:#2d3adb">&gt;</span></div><div style="left:9.5px;top:637.0px;font-family:'Liberation Mono',monospace;font-size:10px;line-height:14px;color:#000;white-space:pre">        <span style="color:#2d3adb">&lt;SceneGenerator</span><span style="color:#2d3adb">&gt;</span></div><div style="left:9.5px;top:651.0px;font-family:'Liberation Mono',monospace;font-size:10px;line-height:14px;color:#000;white-space:pre">            <span style="color:#2d3adb">&lt;ModuleExecutionMode</span><span style="color:#2d3adb">&gt;</span></div><div style="left:9.5px;top:665.0px;font-family:'Liberation Mono',monospace;font-size:10px;line-height:14px;color:#000;white-space:pre">                <span style="color:#2d3adb">&lt;Nominal</span><span style="color:#2d3adb">&gt;</span></div><div style="left:9.5px;top:679.0px;font-family:'Liberation Mono',monospace;font-size:10px;line-height:14px;color:#000;white-space:pre">                    <span style="color:#2d3adb">&lt;parameter</span> <span style="color:#b5540f">description=</span><span style="color:#cf2d84">"text"</span> <span style="color:#b5540f">name=</span><span style="color:#cf2d84">"time_toa_factor"</span> <span style="color:#b5540f">type=</span><span style="color:#cf2d84">"FLOAT"</span><span style="color:#2d3adb">&gt;</span>2<span style="color:#2d3adb">&lt;/parameter</span><span style="color:#2d3adb">&gt;</span></div></div></body></html>
